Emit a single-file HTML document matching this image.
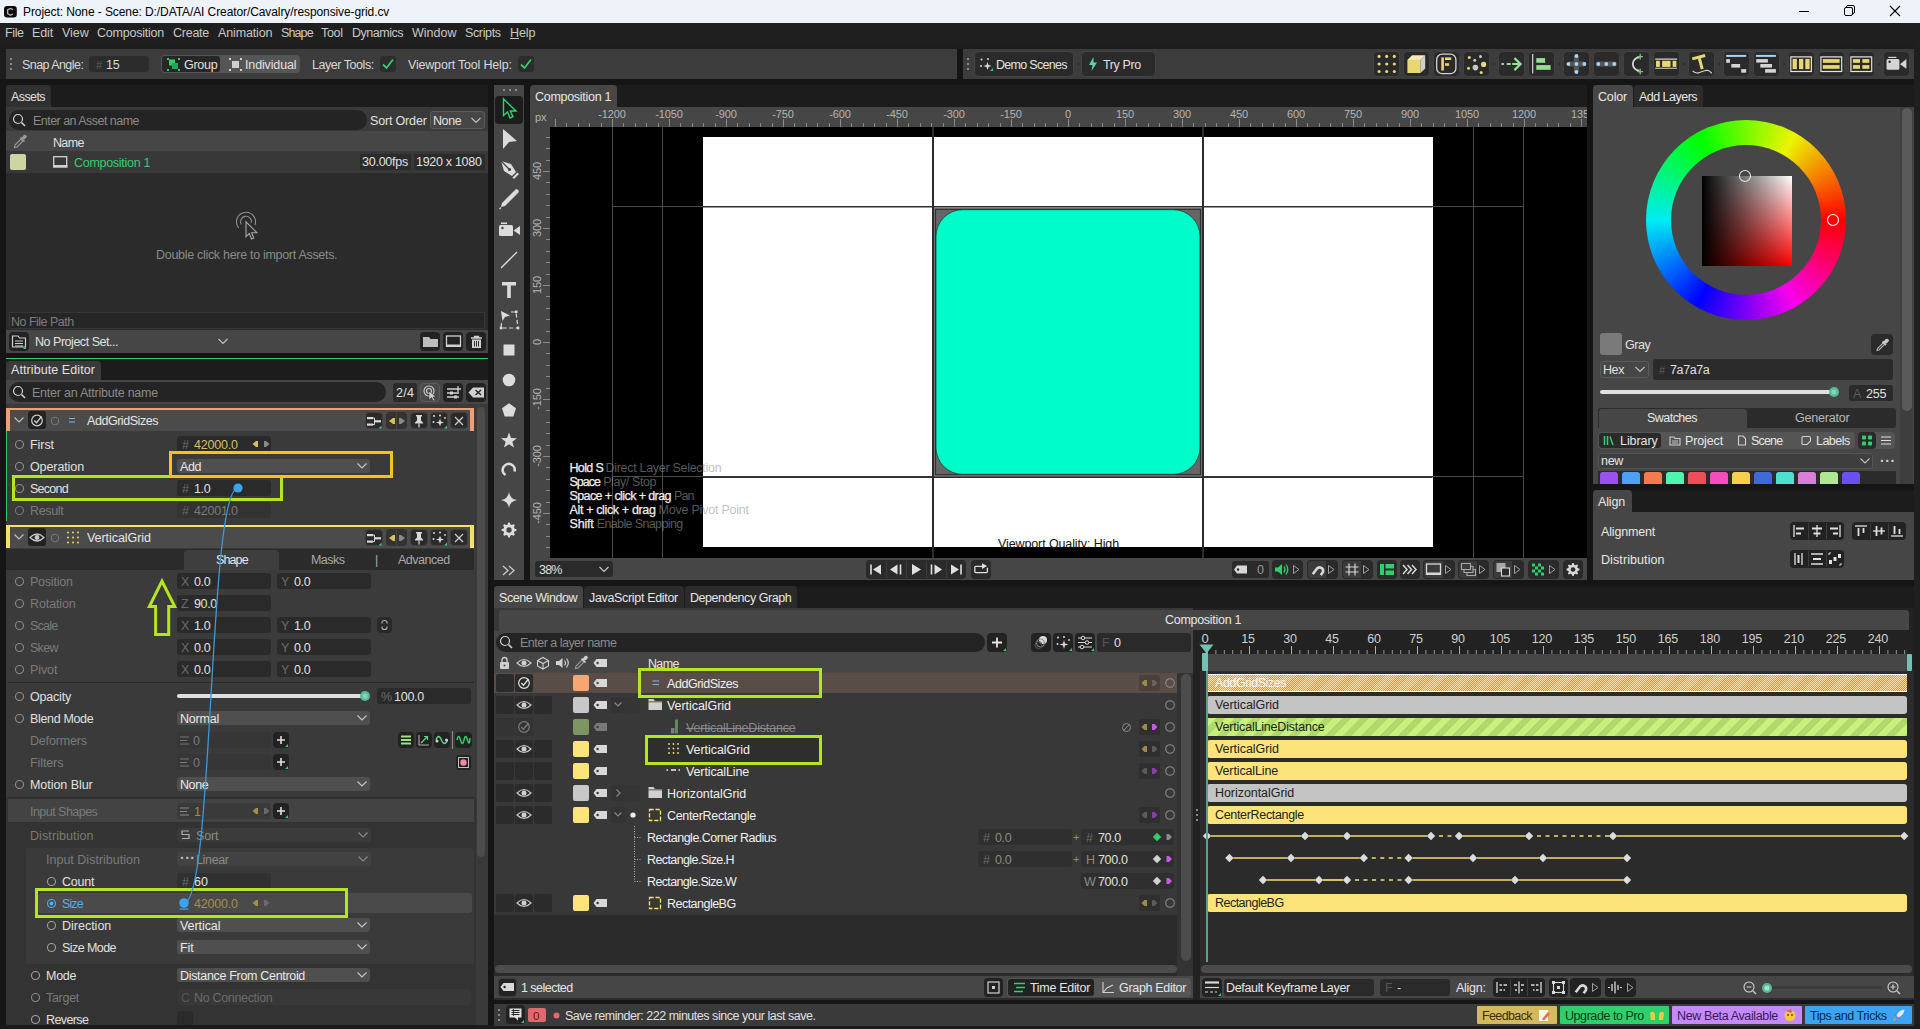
<!DOCTYPE html>
<html lang="en"><head><meta charset="utf-8"><title>Cavalry</title>
<style>
html,body{margin:0;padding:0;}
body{width:1920px;height:1029px;overflow:hidden;background:#151515;position:relative;
 font-family:"Liberation Sans",sans-serif;font-size:12px;letter-spacing:-0.1px;}
div,svg{position:absolute;box-sizing:border-box;}
.t{white-space:nowrap;}
.f{background:#2a2a2a;border-radius:3px;}
.dd{background:#555;border-radius:3px;}
.btn{background:#2a2a2a;border-radius:4px;}
</style></head>
<body>
<div style="left:0px;top:0px;width:1920px;height:23px;background:#eef3f9;"></div>
<svg style="left:3.5px;top:5.5px;" width="13" height="12" viewBox="0 0 13 12"><rect x="0" y="0" width="12.8" height="11.6" rx="3" fill="#0c0c0c"/><path d="M9 3.6 L6.4 2.4 L3.6 4 L3.6 7.6 L6.4 9.2 L9 8" fill="none" stroke="#b0b0b0" stroke-width="1.3"/></svg>
<div class="t" style="left:23px;top:3.5px;height:16px;line-height:16px;color:#000;letter-spacing:-0.09px;">Project: None - Scene: D:/DATA/AI Creator/Cavalry/responsive-grid.cv</div>
<svg style="left:1798px;top:3.5px;" width="14" height="14" viewBox="0 0 14 14"><path d="M1 7.5 H11" stroke="#000" stroke-width="1"/></svg>
<svg style="left:1843px;top:4px;" width="14" height="14" viewBox="0 0 14 14"><rect x="1.5" y="3.5" width="8" height="8" rx="1.5" fill="none" stroke="#000"/><path d="M3.5 3.5 V3 Q3.5 1.5 5 1.5 H10 Q11.5 1.5 11.5 3 V8 Q11.5 9.5 10 9.5 H9.5" fill="none" stroke="#000"/></svg>
<svg style="left:1889px;top:5px;" width="13" height="13" viewBox="0 0 13 13"><path d="M1 1 L11 11 M11 1 L1 11" stroke="#000" stroke-width="1.1"/></svg>
<div style="left:0px;top:23px;width:1920px;height:20px;background:#1f1f1f;"></div>
<div style="left:0px;top:43px;width:1920px;height:6px;background:#1d1d1d;"></div>
<div style="left:0px;top:49px;width:6px;height:30px;background:#1d1d1d;"></div>
<div style="left:1914px;top:43px;width:6px;height:986px;background:#1f1f1f;"></div>
<div class="t" style="left:5px;top:25px;height:16px;line-height:16px;color:#c8c8c8;font-size:12.5px;letter-spacing:-0.2px;letter-spacing:-0.389px;">File</div>
<div class="t" style="left:32px;top:25px;height:16px;line-height:16px;color:#c8c8c8;font-size:12.5px;letter-spacing:-0.2px;letter-spacing:-0.137px;">Edit</div>
<div class="t" style="left:62px;top:25px;height:16px;line-height:16px;color:#c8c8c8;font-size:12.5px;letter-spacing:-0.2px;letter-spacing:-0.044px;">View</div>
<div class="t" style="left:97px;top:25px;height:16px;line-height:16px;color:#c8c8c8;font-size:12.5px;letter-spacing:-0.2px;letter-spacing:-0.226px;">Composition</div>
<div class="t" style="left:173px;top:25px;height:16px;line-height:16px;color:#c8c8c8;font-size:12.5px;letter-spacing:-0.2px;letter-spacing:-0.255px;">Create</div>
<div class="t" style="left:218px;top:25px;height:16px;line-height:16px;color:#c8c8c8;font-size:12.5px;letter-spacing:-0.2px;letter-spacing:-0.133px;">Animation</div>
<div class="t" style="left:281px;top:25px;height:16px;line-height:16px;color:#c8c8c8;font-size:12.5px;letter-spacing:-0.2px;letter-spacing:-0.891px;">Shape</div>
<div class="t" style="left:321px;top:25px;height:16px;line-height:16px;color:#c8c8c8;font-size:12.5px;letter-spacing:-0.2px;letter-spacing:-0.334px;">Tool</div>
<div class="t" style="left:352px;top:25px;height:16px;line-height:16px;color:#c8c8c8;font-size:12.5px;letter-spacing:-0.2px;letter-spacing:-0.484px;">Dynamics</div>
<div class="t" style="left:412px;top:25px;height:16px;line-height:16px;color:#c8c8c8;font-size:12.5px;letter-spacing:-0.2px;letter-spacing:-0.011px;">Window</div>
<div class="t" style="left:465px;top:25px;height:16px;line-height:16px;color:#c8c8c8;font-size:12.5px;letter-spacing:-0.2px;letter-spacing:-0.358px;">Scripts</div>
<div class="t" style="left:510px;top:25px;height:16px;line-height:16px;color:#c8c8c8;font-size:12.5px;letter-spacing:-0.2px;letter-spacing:-0.080px;"><u>H</u>elp</div>
<div style="left:6px;top:49px;width:951px;height:30px;background:#3c3c3c;"></div>
<div style="left:963px;top:49px;width:951px;height:30px;background:#3c3c3c;"></div>
<div style="left:0px;top:79px;width:1914px;height:6px;background:#151515;"></div>
<div style="left:6px;top:85px;width:482px;height:22px;background:#1c1c1c;"></div>
<div style="left:6px;top:359px;width:482px;height:22px;background:#1c1c1c;"></div>
<div style="left:530px;top:85px;width:1057px;height:22px;background:#1c1c1c;"></div>
<div style="left:1593px;top:85px;width:321px;height:22px;background:#1c1c1c;"></div>
<div style="left:1593px;top:490px;width:321px;height:22px;background:#1c1c1c;"></div>
<div style="left:494px;top:586px;width:1420px;height:22px;background:#1c1c1c;"></div>
<div style="left:10px;top:58px;width:2px;height:2px;background:#8a8a8a;"></div>
<div style="left:10px;top:63px;width:2px;height:2px;background:#8a8a8a;"></div>
<div style="left:10px;top:68px;width:2px;height:2px;background:#8a8a8a;"></div>
<div style="left:967px;top:58px;width:2px;height:2px;background:#8a8a8a;"></div>
<div style="left:967px;top:63px;width:2px;height:2px;background:#8a8a8a;"></div>
<div style="left:967px;top:68px;width:2px;height:2px;background:#8a8a8a;"></div>
<div class="t" style="left:22px;top:57px;height:16px;line-height:16px;color:#d8d8d8;font-size:12.5px;letter-spacing:-0.2px;letter-spacing:-0.557px;">Snap Angle:</div>
<div style="left:89px;top:56px;width:60px;height:16px;background:#2c2c2c;border-radius:3px;"></div>
<div class="t" style="left:96px;top:57px;height:16px;line-height:16px;color:#5c5c5c;font-size:11px;">#</div>
<div class="t" style="left:106px;top:57px;height:16px;line-height:16px;color:#d8d8d8;font-size:12.5px;">15</div>
<div style="left:161px;top:55px;width:139px;height:18px;background:#555;border-radius:4px;"></div>
<div style="left:162px;top:56px;width:58px;height:16px;background:#262626;border-radius:3px;"></div>
<svg style="left:167px;top:58px;" width="13" height="13" viewBox="0 0 13 13"><rect x="2" y="1.5" width="6" height="6" fill="#2fd06c"/><rect x="5" y="5" width="6" height="6" fill="#23a554"/><g fill="#2fd06c"><rect x="0" y="0" width="2" height="2"/><rect x="11" y="0" width="2" height="2"/><rect x="0" y="11" width="2" height="2"/><rect x="11" y="11" width="2" height="2"/></g></svg>
<div class="t" style="left:184px;top:57px;height:16px;line-height:16px;color:#e0e0e0;font-size:12.5px;letter-spacing:-0.2px;letter-spacing:-0.290px;">Group</div>
<svg style="left:229px;top:58px;" width="13" height="13" viewBox="0 0 13 13"><rect x="3" y="3" width="7" height="7" fill="#d0d0d0"/><g fill="#d0d0d0"><rect x="0" y="0" width="2" height="2"/><rect x="11" y="0" width="2" height="2"/><rect x="0" y="11" width="2" height="2"/><rect x="11" y="11" width="2" height="2"/></g></svg>
<div class="t" style="left:245px;top:57px;height:16px;line-height:16px;color:#e0e0e0;font-size:12.5px;letter-spacing:-0.2px;letter-spacing:-0.143px;">Individual</div>
<div class="t" style="left:312px;top:57px;height:16px;line-height:16px;color:#d8d8d8;font-size:12.5px;letter-spacing:-0.2px;letter-spacing:-0.456px;">Layer Tools:</div>
<div style="left:380px;top:56px;width:16px;height:16px;background:#2c2c2c;border-radius:3px;"></div>
<svg style="left:381px;top:57px;" width="14" height="14" viewBox="0 0 14 14"><path d="M2 7.5 L5.5 11 L12 2.5" fill="none" stroke="#2fd06c" stroke-width="1.8"/></svg>
<div class="t" style="left:408px;top:57px;height:16px;line-height:16px;color:#d8d8d8;font-size:12.5px;letter-spacing:-0.2px;letter-spacing:-0.187px;">Viewport Tool Help:</div>
<div style="left:518px;top:56px;width:16px;height:16px;background:#2c2c2c;border-radius:3px;"></div>
<svg style="left:519px;top:57px;" width="14" height="14" viewBox="0 0 14 14"><path d="M2 7.5 L5.5 11 L12 2.5" fill="none" stroke="#2fd06c" stroke-width="1.8"/></svg>
<div style="left:974px;top:51px;width:100px;height:26px;background:#2a2a2a;border-radius:5px;border:1px solid #444;"></div>
<svg style="left:979px;top:57px;" width="15" height="15" viewBox="0 0 15 15"><g fill="#d8d8d8"><circle cx="2.5" cy="2.5" r="1"/><circle cx="9" cy="2" r="1"/><circle cx="2" cy="9" r="1"/><path d="M8.5 5 L9.5 8 L12.5 9 L9.5 10 L8.5 13 L7.5 10 L4.5 9 L7.5 8 Z"/></g><path d="M11 14 H14 V11 Z" fill="#2fd06c"/></svg>
<div class="t" style="left:996px;top:57px;height:16px;line-height:16px;color:#e0e0e0;font-size:12.5px;letter-spacing:-0.25px;letter-spacing:-0.711px;">Demo Scenes</div>
<div style="left:1081px;top:51px;width:75px;height:26px;background:#2a2a2a;border-radius:5px;border:1px solid #444;"></div>
<svg style="left:1087px;top:57px;" width="12" height="14" viewBox="0 0 12 14"><path d="M6.5 0 L2 8 H5.5 L4.5 14 L10 5.5 H6.5 Z" fill="#5fd3a3"/></svg>
<div class="t" style="left:1103px;top:57px;height:16px;line-height:16px;color:#e0e0e0;font-size:12.5px;letter-spacing:-0.2px;letter-spacing:-0.402px;">Try Pro</div>
<div style="left:1372.5px;top:51px;width:27px;height:26px;background:#2a2a2a;border-radius:4.5px;border:1px solid #424242;"></div>
<svg style="left:1372.5px;top:51px;" width="27" height="26" viewBox="0 0 27 26"><circle cx="6.1" cy="5.4" r="1.55" fill="#e8d873"/><circle cx="6.1" cy="13" r="1.55" fill="#e8d873"/><circle cx="6.1" cy="20.5" r="1.55" fill="#e8d873"/><circle cx="13.7" cy="5.4" r="1.55" fill="#e8d873"/><circle cx="13.7" cy="13" r="1.55" fill="#e8d873"/><circle cx="13.7" cy="20.5" r="1.55" fill="#e8d873"/><circle cx="21.3" cy="5.4" r="1.55" fill="#e8d873"/><circle cx="21.3" cy="13" r="1.55" fill="#e8d873"/><circle cx="21.3" cy="20.5" r="1.55" fill="#e8d873"/></svg>
<div style="left:1402.5px;top:51px;width:27px;height:26px;background:#2a2a2a;border-radius:4.5px;border:1px solid #424242;"></div>
<svg style="left:1402.5px;top:51px;" width="27" height="26" viewBox="0 0 27 26"><rect x="4.4" y="9" width="13.1" height="13" fill="#e8d873"/><path d="M4.4 9 L9.1 4.2 H22.2 L17.5 9 Z" fill="#f4ecb4"/><path d="M17.5 9 L22.2 4.2 V17.6 L17.5 22 Z" fill="#cfcfcf"/></svg>
<div style="left:1433px;top:51px;width:27px;height:26px;background:#2a2a2a;border-radius:4.5px;border:1px solid #424242;"></div>
<svg style="left:1433px;top:51px;" width="27" height="26" viewBox="0 0 27 26"><rect x="3.7" y="3.2" width="19.2" height="19.5" rx="5.5" fill="none" stroke="#d4d4d4" stroke-width="1.3"/><rect x="8.3" y="6.4" width="2.6" height="13.1" fill="#e8d873"/><rect x="12" y="6.4" width="6.2" height="2.6" fill="#e8d873"/><rect x="12" y="12.2" width="4.1" height="2.6" fill="#e8d873"/></svg>
<div style="left:1463px;top:51px;width:27px;height:26px;background:#2a2a2a;border-radius:4.5px;border:1px solid #424242;"></div>
<svg style="left:1463px;top:51px;" width="27" height="26" viewBox="0 0 27 26"><circle cx="6.3" cy="6.4" r="1.5" fill="#e8d873"/><circle cx="5.5" cy="17.3" r="1.5" fill="#e8d873"/><circle cx="18.2" cy="21.4" r="1.5" fill="#e8d873"/><circle cx="17.5" cy="5.4" r="1.5" fill="#c8c8c8"/><circle cx="11.7" cy="9.3" r="1.5" fill="#c8c8c8"/><circle cx="20.6" cy="13.4" r="2.6" fill="#e8d873"/><circle cx="12.4" cy="16.6" r="2.8" fill="#c8c8c8"/></svg>
<div style="left:1497.5px;top:51px;width:27px;height:26px;background:#2a2a2a;border-radius:4.5px;border:1px solid #424242;"></div>
<svg style="left:1497.5px;top:51px;" width="27" height="26" viewBox="0 0 27 26"><path d="M3.5 13 H5.9 M8.8 13 H12.7 M14.2 13 H22" stroke="#96e096" stroke-width="2"/><path d="M16.4 7.1 L22.6 13 L16.4 19.1" stroke="#96e096" stroke-width="2.2" fill="none"/></svg>
<div style="left:1527.5px;top:51px;width:27px;height:26px;background:#2a2a2a;border-radius:4.5px;border:1px solid #424242;"></div>
<svg style="left:1527.5px;top:51px;" width="27" height="26" viewBox="0 0 27 26"><path d="M4.7 3 V22.4" stroke="#d4d4d4" stroke-width="1.2"/><rect x="8.3" y="7.1" width="8.8" height="4.7" fill="#96e096"/><rect x="8.3" y="14.1" width="14.3" height="4.7" fill="#96e096"/></svg>
<div style="left:1562.5px;top:51px;width:27px;height:26px;background:#2a2a2a;border-radius:4.5px;border:1px solid #424242;"></div>
<svg style="left:1562.5px;top:51px;" width="27" height="26" viewBox="0 0 27 26"><path d="M13.4 5 V21 M5.4 13 H21.4" stroke="#555" stroke-width="5"/><circle cx="13.4" cy="5" r="1.9" fill="#a6d4fa"/><circle cx="13.4" cy="13" r="1.9" fill="#a6d4fa"/><circle cx="13.4" cy="21" r="1.9" fill="#a6d4fa"/><circle cx="5.4" cy="13" r="1.9" fill="#a6d4fa"/><circle cx="21.4" cy="13" r="1.9" fill="#a6d4fa"/></svg>
<div style="left:1593px;top:51px;width:27px;height:26px;background:#2a2a2a;border-radius:4.5px;border:1px solid #424242;"></div>
<svg style="left:1593px;top:51px;" width="27" height="26" viewBox="0 0 27 26"><path d="M5.3 13 H21.3" stroke="#555" stroke-width="5" stroke-linecap="round"/><circle cx="5.3" cy="13" r="1.9" fill="#a6d4fa"/><circle cx="13.3" cy="13" r="1.9" fill="#a6d4fa"/><circle cx="21.3" cy="13" r="1.9" fill="#a6d4fa"/></svg>
<div style="left:1623px;top:51px;width:27px;height:26px;background:#2a2a2a;border-radius:4.5px;border:1px solid #424242;"></div>
<svg style="left:1623px;top:51px;" width="27" height="26" viewBox="0 0 27 26"><path d="M16.4 6.4 A6.6 6.6 0 0 0 16.4 19.6" fill="none" stroke="#d4d4d4" stroke-width="1.8"/><path d="M14 5.6 H20 M17.2 2.8 V8.4 M14 20.6 H20 M17.2 17.8 V23.4" stroke="#7ec07e" stroke-width="1.3"/></svg>
<div style="left:1653px;top:51px;width:27px;height:26px;background:#2a2a2a;border-radius:4.5px;border:1px solid #424242;"></div>
<svg style="left:1653px;top:51px;" width="27" height="26" viewBox="0 0 27 26"><path d="M2.2 8.1 H24.1 M2.2 17.3 H24.1" stroke="#d4d4d4" stroke-width="1.1"/><rect x="3" y="9.8" width="3.9" height="6.1" fill="#e8d873"/><rect x="9.1" y="9.8" width="8.4" height="6.1" fill="#e8d873"/><rect x="19.6" y="9.8" width="3.8" height="6.1" fill="#e8d873"/></svg>
<div style="left:1688px;top:51px;width:27px;height:26px;background:#2a2a2a;border-radius:4.5px;border:1px solid #424242;"></div>
<svg style="left:1688px;top:51px;" width="27" height="26" viewBox="0 0 27 26"><path d="M4.3 7.9 L17.1 4.5" stroke="#e8d873" stroke-width="3"/><path d="M11.3 7.1 L14.2 18.1" stroke="#e8d873" stroke-width="3"/><path d="M4.7 20 Q8 23 11.5 21.5 T18.6 19.3 Q22 19.5 23.7 22.4" fill="none" stroke="#d4d4d4" stroke-width="1.1"/></svg>
<div style="left:1723px;top:51px;width:27px;height:26px;background:#2a2a2a;border-radius:4.5px;border:1px solid #424242;"></div>
<svg style="left:1723px;top:51px;" width="27" height="26" viewBox="0 0 27 26"><path d="M3.2 4.9 H23.2" stroke="#a6d4fa" stroke-width="2"/><rect x="3.2" y="8.1" width="3.7" height="3.7" fill="#d4d4d4"/><rect x="8.3" y="13" width="8.8" height="3.6" fill="#d4d4d4"/><rect x="18.2" y="18.1" width="5" height="3.6" fill="#d4d4d4"/></svg>
<div style="left:1753px;top:51px;width:27px;height:26px;background:#2a2a2a;border-radius:4.5px;border:1px solid #424242;"></div>
<svg style="left:1753px;top:51px;" width="27" height="26" viewBox="0 0 27 26"><path d="M2.9 4.9 H22.9" stroke="#a6d4fa" stroke-width="2"/><rect x="3.2" y="8.1" width="11.7" height="3.5" fill="#d4d4d4"/><rect x="7.3" y="13" width="11.7" height="3.6" fill="#d4d4d4"/><rect x="12.1" y="18.1" width="10.8" height="3.6" fill="#d4d4d4"/></svg>
<div style="left:1788px;top:51px;width:27px;height:26px;background:#2a2a2a;border-radius:4.5px;border:1px solid #424242;"></div>
<svg style="left:1788px;top:51px;" width="27" height="26" viewBox="0 0 27 26"><rect x="2.8" y="5.9" width="20.6" height="14.6" fill="none" stroke="#e4e4e4" stroke-width="1.2"/><rect x="4.6" y="7.9" width="4.3" height="10.2" fill="#e8d873"/><rect x="11" y="7.9" width="4.3" height="10.2" fill="#e8d873"/><rect x="17.3" y="7.9" width="4.3" height="10.2" fill="#e8d873"/></svg>
<div style="left:1818px;top:51px;width:27px;height:26px;background:#2a2a2a;border-radius:4.5px;border:1px solid #424242;"></div>
<svg style="left:1818px;top:51px;" width="27" height="26" viewBox="0 0 27 26"><rect x="2.9" y="5.9" width="20.8" height="14.6" fill="none" stroke="#e4e4e4" stroke-width="1.2"/><rect x="4.8" y="8.1" width="16.8" height="3.7" fill="#e8d873"/><rect x="4.8" y="14.1" width="16.8" height="3.7" fill="#e8d873"/></svg>
<div style="left:1848px;top:51px;width:27px;height:26px;background:#2a2a2a;border-radius:4.5px;border:1px solid #424242;"></div>
<svg style="left:1848px;top:51px;" width="27" height="26" viewBox="0 0 27 26"><rect x="2.9" y="5.9" width="20.8" height="14.6" fill="none" stroke="#e4e4e4" stroke-width="1.2"/><rect x="4.9" y="8.1" width="7.1" height="3.7" fill="#e8d873"/><rect x="14.3" y="8.1" width="7" height="3.7" fill="#e8d873"/><rect x="4.9" y="14.1" width="7.1" height="3.7" fill="#e8d873"/><rect x="14.3" y="14.1" width="7" height="3.7" fill="#e8d873"/></svg>
<div style="left:1882.5px;top:51px;width:27px;height:26px;background:#2a2a2a;border-radius:4.5px;border:1px solid #424242;"></div>
<svg style="left:1882.5px;top:51px;" width="27" height="26" viewBox="0 0 27 26"><rect x="3.5" y="8.1" width="12.9" height="10.7" rx="1.5" fill="#d4d4d4"/><path d="M17 13.2 L23.4 8.1 V17.8 Z" fill="#d4d4d4"/><rect x="5.4" y="5.8" width="8" height="1.2" fill="#d4d4d4"/><circle cx="6.6" cy="10.7" r="1.2" fill="#2a2a2a"/></svg>
<div style="left:1492.5px;top:63px;width:2px;height:2px;background:#2a2a2a;border-radius:1px;"></div>
<div style="left:1557.5px;top:63px;width:2px;height:2px;background:#2a2a2a;border-radius:1px;"></div>
<div style="left:1682.5px;top:63px;width:2px;height:2px;background:#2a2a2a;border-radius:1px;"></div>
<div style="left:1717.5px;top:63px;width:2px;height:2px;background:#2a2a2a;border-radius:1px;"></div>
<div style="left:1782.5px;top:63px;width:2px;height:2px;background:#2a2a2a;border-radius:1px;"></div>
<div style="left:1877.5px;top:63px;width:2px;height:2px;background:#2a2a2a;border-radius:1px;"></div>
<div style="left:1076.5px;top:63px;width:2px;height:2px;background:#2a2a2a;border-radius:1px;"></div>
<div style="left:6px;top:85px;width:45px;height:23px;background:#303030;border-radius:4px 4px 0 0;"></div>
<div class="t" style="left:11px;top:89px;height:16px;line-height:16px;color:#e0e0e0;font-size:12.5px;letter-spacing:-0.35px;letter-spacing:-0.586px;">Assets</div>
<div style="left:6px;top:107px;width:482px;height:246px;background:#2b2b2b;"></div>
<div style="left:6px;top:107px;width:482px;height:24px;background:#3a3a3a;"></div>
<div style="left:9px;top:110px;width:358px;height:20px;background:#242424;border-radius:10px;"></div>
<svg style="left:12px;top:113px;" width="15" height="15" viewBox="0 0 15 15"><circle cx="6" cy="6" r="4.5" fill="none" stroke="#d0d0d0" stroke-width="1.2"/><path d="M9.5 9.5 L13 13" stroke="#d0d0d0" stroke-width="1.6"/></svg>
<div class="t" style="left:33px;top:112.5px;height:16px;line-height:16px;color:#8a8a8a;font-size:12.5px;letter-spacing:-0.35px;letter-spacing:-0.529px;">Enter an Asset name</div>
<div class="t" style="left:370px;top:112.5px;height:16px;line-height:16px;color:#e0e0e0;font-size:12.5px;letter-spacing:-0.35px;letter-spacing:-0.166px;">Sort Order</div>
<div style="left:430px;top:111px;width:55px;height:18px;background:#464646;border-radius:3px;border:1px solid #5a5a5a;"></div>
<div class="t" style="left:433px;top:112.5px;height:16px;line-height:16px;color:#e0e0e0;font-size:12.5px;letter-spacing:-0.35px;letter-spacing:-0.423px;">None</div>
<svg style="left:470px;top:116px;" width="12" height="9" viewBox="0 0 12 9"><path d="M1.5 2 L6 6.5 L10.5 2" fill="none" stroke="#c0c0c0" stroke-width="1.2"/></svg>
<div style="left:6px;top:131px;width:482px;height:20px;background:#464646;"></div>
<svg style="left:13px;top:134px;" width="14" height="15" viewBox="0 0 14 15"><path d="M1.5 13.5 L2 11 L8 5 L10 7 L4 13 Z" fill="none" stroke="#9a9a9a" stroke-width="1.1"/><path d="M7.5 3.5 L11.5 7.5 M9 5 L11 2 Q12.5 1 13 2.5 L11 5" stroke="#9a9a9a" stroke-width="1.6" fill="#9a9a9a"/></svg>
<div class="t" style="left:53px;top:134.5px;height:16px;line-height:16px;color:#e0e0e0;font-size:12.5px;letter-spacing:-0.35px;letter-spacing:-0.661px;">Name</div>
<div style="left:6px;top:151px;width:482px;height:22px;background:#383838;"></div>
<div style="left:10px;top:154px;width:16px;height:16px;background:#cdd5a3;border-radius:2px;"></div>
<svg style="left:53px;top:156px;" width="15" height="13" viewBox="0 0 15 13"><rect x="0.7" y="0.7" width="13" height="10" fill="none" stroke="#d0d0d0" stroke-width="1.3"/><rect x="0" y="9" width="14.4" height="2.6" fill="#d0d0d0"/></svg>
<div class="t" style="left:74px;top:154.5px;height:16px;line-height:16px;color:#2fd06c;font-size:12.5px;letter-spacing:-0.35px;letter-spacing:-0.285px;">Composition 1</div>
<div style="left:360px;top:154px;width:51px;height:16px;background:#2b2b2b;border-radius:2px;"></div>
<div class="t" style="left:362px;top:154px;height:16px;line-height:16px;color:#e0e0e0;font-size:12.5px;letter-spacing:-0.3px;letter-spacing:-0.246px;">30.00fps</div>
<div style="left:414px;top:154px;width:71px;height:16px;background:#2b2b2b;border-radius:2px;"></div>
<div class="t" style="left:416px;top:154px;height:16px;line-height:16px;color:#e0e0e0;font-size:12.5px;letter-spacing:-0.3px;letter-spacing:-0.292px;">1920 x 1080</div>
<svg style="left:233px;top:209px;" width="28" height="34" viewBox="0 0 28 34"><path d="M21.93 16.05 A9.5 9.5 0 1 0 5.72 18.9" fill="none" stroke="#8e8e8e" stroke-width="1.1"/><path d="M18.42 13.75 A5.5 5.5 0 1 0 8.24 15.55" fill="none" stroke="#8e8e8e" stroke-width="1.1"/><path d="M13 12.8 L13 27.7 L16.3 24.5 L18.5 30 L20.8 29 L18.6 23.7 L23.9 23.7 Z" fill="#2b2b2b" stroke="#a8a8a8" stroke-width="1.1"/></svg>
<div class="t" style="left:156px;top:247px;height:16px;line-height:16px;color:#8a8a8a;font-size:12.5px;letter-spacing:-0.28px;letter-spacing:-0.299px;">Double click here to import Assets.</div>
<div style="left:6px;top:330px;width:482px;height:23px;background:#464646;"></div>
<div style="left:9px;top:312px;width:476px;height:17px;background:#262626;border:1px solid #363636;"></div>
<div class="t" style="left:11px;top:313.5px;height:16px;line-height:16px;color:#7c7c7c;font-size:12.5px;letter-spacing:-0.35px;letter-spacing:-0.507px;">No File Path</div>
<div style="left:9px;top:332px;width:20px;height:19px;background:#222;border-radius:4px;"></div>
<svg style="left:11px;top:334px;" width="16" height="15" viewBox="0 0 16 15"><path d="M1.5 2 H7 L8.5 4 H14.5 V13 H1.5 Z" fill="none" stroke="#d0d0d0" stroke-width="1.2"/><path d="M4 7 H12 M4 9.5 H12 M4 12 H12" stroke="#d0d0d0" stroke-width="1.1"/><path d="M12 15 H15 V12 Z" fill="#2fd06c"/></svg>
<div style="left:32px;top:332px;width:200px;height:19px;background:#464646;border-radius:3px;"></div>
<div class="t" style="left:35px;top:334px;height:16px;line-height:16px;color:#e0e0e0;font-size:12.5px;letter-spacing:-0.35px;letter-spacing:-0.472px;">No Project Set...</div>
<svg style="left:217px;top:337px;" width="12" height="9" viewBox="0 0 12 9"><path d="M1.5 2 L6 6.5 L10.5 2" fill="none" stroke="#c0c0c0" stroke-width="1.2"/></svg>
<div style="left:420px;top:332px;width:20px;height:19px;background:#222;border-radius:4px;"></div>
<svg style="left:420px;top:332px;" width="21" height="19" viewBox="0 0 21 19"><path d="M3 5 H9 L10.5 7 H18 V15 H3 Z" fill="#bdbdbd"/></svg>
<div style="left:443px;top:332px;width:20px;height:19px;background:#222;border-radius:4px;"></div>
<svg style="left:443px;top:332px;" width="21" height="19" viewBox="0 0 21 19"><rect x="3.5" y="4" width="14" height="10" fill="none" stroke="#d0d0d0" stroke-width="1.3"/><rect x="3" y="12.5" width="15" height="2.5" fill="#d0d0d0"/></svg>
<div style="left:466px;top:332px;width:20px;height:19px;background:#222;border-radius:4px;"></div>
<svg style="left:466px;top:332px;" width="21" height="19" viewBox="0 0 21 19"><path d="M5 6 H16 M8.5 6 V4.5 H12.5 V6" stroke="#d0d0d0" stroke-width="1.3" fill="none"/><path d="M6 7.5 H15 V16 H6 Z" fill="#d0d0d0"/><path d="M8.5 9 V14.5 M10.5 9 V14.5 M12.5 9 V14.5" stroke="#222" stroke-width="0.9"/></svg>
<div style="left:6px;top:357.5px;width:482px;height:1.7px;background:#2fd06c;"></div>
<div style="left:6px;top:361px;width:95px;height:19px;background:#3a3a3a;border-radius:4px 4px 0 0;"></div>
<div class="t" style="left:11px;top:362px;height:16px;line-height:16px;color:#e0e0e0;font-size:12.5px;letter-spacing:-0.35px;letter-spacing:0.082px;">Attribute Editor</div>
<div style="left:6px;top:380px;width:482px;height:649px;background:#3a3a3a;"></div>
<div style="left:6px;top:380px;width:482px;height:24px;background:#464646;"></div>
<div style="left:9px;top:382px;width:377px;height:20px;background:#242424;border-radius:10px;"></div>
<svg style="left:12px;top:385px;" width="15" height="15" viewBox="0 0 15 15"><circle cx="6" cy="6" r="4.5" fill="none" stroke="#d0d0d0" stroke-width="1.2"/><path d="M9.5 9.5 L13 13" stroke="#d0d0d0" stroke-width="1.6"/></svg>
<div class="t" style="left:32px;top:385px;height:16px;line-height:16px;color:#8a8a8a;font-size:12.5px;letter-spacing:-0.35px;letter-spacing:-0.232px;">Enter an Attribute name</div>
<div style="left:393px;top:383px;width:24px;height:19px;background:#2a2a2a;border-radius:3px;"></div>
<div class="t" style="left:396px;top:385px;height:16px;line-height:16px;color:#e0e0e0;font-size:12.5px;letter-spacing:-0.35px;letter-spacing:0.303px;">2/4</div>
<div style="left:420px;top:382.5px;width:20px;height:19px;background:#4a4a4a;border-radius:4px;border:1px solid #5c5c5c;"></div>
<svg style="left:420px;top:382.5px;" width="21" height="19" viewBox="0 0 21 19"><circle cx="9" cy="8" r="5" fill="none" stroke="#d0d0d0" stroke-width="1.1"/><circle cx="9" cy="8" r="2.5" fill="none" stroke="#d0d0d0" stroke-width="1.1"/><path d="M9 8 V17 L11.5 14.5 L13.5 18 L15 17 L13 14 H16 Z" fill="#d0d0d0" stroke="#222" stroke-width="0.5"/></svg>
<div style="left:443px;top:382.5px;width:20px;height:19px;background:#222;border-radius:4px;"></div>
<svg style="left:443px;top:382.5px;" width="21" height="19" viewBox="0 0 21 19"><path d="M4 6 H12 M4 10 H16 M4 14 H16" stroke="#d0d0d0" stroke-width="1.6"/><path d="M15 3 V9 M12 6 H18" stroke="#d0d0d0" stroke-width="1.3"/><rect x="7" y="8.5" width="3" height="3" fill="#d0d0d0"/><rect x="11" y="12.5" width="3" height="3" fill="#d0d0d0"/></svg>
<div style="left:466px;top:382.5px;width:20px;height:19px;background:#222;border-radius:4px;"></div>
<svg style="left:466px;top:382.5px;" width="21" height="19" viewBox="0 0 21 19"><path d="M2.5 9.5 L7 4.5 H18 V14.5 H7 Z" fill="#d0d0d0"/><path d="M9.5 7 L15 12 M15 7 L9.5 12" stroke="#222" stroke-width="1.4"/></svg>
<div style="left:6px;top:405px;width:470px;height:624px;background:#3a3a3a;"></div>
<div style="left:477px;top:407px;width:8px;height:450px;background:#4c4c4c;border-radius:4px;"></div>
<div style="left:6px;top:408px;width:468px;height:23px;background:#4b4b4b;"></div>
<div style="left:6px;top:408px;width:468px;height:1.5px;background:#f0a070;"></div>
<div style="left:6px;top:408px;width:4px;height:23px;background:#f0a070;border-radius:3px 0 0 0;"></div>
<div style="left:470px;top:408px;width:4px;height:23px;background:#f0a070;border-radius:0 3px 0 0;"></div>
<svg style="left:13px;top:415px;" width="12" height="10" viewBox="0 0 12 10"><path d="M1.5 2.5 L6 7 L10.5 2.5" fill="none" stroke="#c0c0c0" stroke-width="1.2"/></svg>
<div style="left:28px;top:411px;width:18px;height:18px;background:#222;border-radius:3px;"></div>
<svg style="left:28px;top:411.5px;" width="18" height="17" viewBox="0 0 18 17"><circle cx="9" cy="8.5" r="5.3" fill="none" stroke="#d0d0d0" stroke-width="1.2"/><path d="M6.3 8.5 L8.5 10.7 L13.5 4.5" fill="none" stroke="#d0d0d0" stroke-width="1.3"/></svg>
<svg style="left:50px;top:416px;" width="10" height="10" viewBox="0 0 10 10"><circle cx="5" cy="5" r="3.7" fill="none" stroke="#777" stroke-width="1.1"/></svg>
<svg style="left:64px;top:413px;" width="18" height="15" viewBox="0 0 18 15"><path d="M5 5.5 H11 M5 9 H11" stroke="#7ab4f0" stroke-width="1.2"/></svg>
<div class="t" style="left:87px;top:413px;height:16px;line-height:16px;color:#e6e6e6;font-size:12.5px;letter-spacing:-0.35px;letter-spacing:-0.453px;">AddGridSizes</div>
<div style="left:365px;top:411.5px;width:18px;height:17.5px;background:#2a2a2a;border-radius:4px;border:1px solid #404040;"></div>
<svg style="left:364px;top:411.5px;" width="20" height="18" viewBox="0 0 20 18"><g fill="#d8d8d8"><rect x="3" y="5" width="6" height="2.2"/><rect x="3" y="11.5" width="6" height="2.2"/><rect x="11" y="8.2" width="6" height="2.2"/></g><path d="M9 6 H10.5 V12.6 H9 M10.5 9.3 H11" stroke="#d8d8d8" stroke-width="1" fill="none"/><path d="M14.5 16.5 H17.5 V13.5 Z" fill="#2fd06c"/></svg>
<div style="left:386px;top:411.5px;width:21px;height:17.5px;background:#333;border-radius:4px;"></div>
<div style="left:396px;top:412px;width:1px;height:16.5px;background:#454545;"></div>
<svg style="left:384.5px;top:411.5px;" width="24" height="18" viewBox="0 0 24 18"><path d="M4 9 L8 6 H10 V12 H8 Z" fill="#d9bf5a"/><path d="M20 9 L16 6 H14 V12 H16 Z" fill="#8a8a8a"/></svg>
<div style="left:410px;top:411.5px;width:18px;height:17.5px;background:#2a2a2a;border-radius:4px;border:1px solid #404040;"></div>
<svg style="left:410px;top:411.5px;" width="18" height="18" viewBox="0 0 18 18"><path d="M6 3 H12 V4.5 H11 V8.5 L13 10.5 V11.5 H5 V10.5 L7 8.5 V4.5 H6 Z" fill="#d8d8d8"/><path d="M9 11.5 V15.5" stroke="#d8d8d8" stroke-width="1.2"/></svg>
<div style="left:430px;top:411.5px;width:18px;height:17.5px;background:#2a2a2a;border-radius:4px;border:1px solid #404040;"></div>
<svg style="left:429.5px;top:411.5px;" width="19" height="18" viewBox="0 0 19 18"><g fill="#d8d8d8"><circle cx="4" cy="4" r="1"/><circle cx="10" cy="3.5" r="1"/><circle cx="3.5" cy="10" r="1"/><circle cx="15" cy="6" r="0.9"/><path d="M10 6.5 L11 9.5 L14 10.5 L11 11.5 L10 14.5 L9 11.5 L6 10.5 L9 9.5 Z"/></g><path d="M14 16.5 H17 V13.5 Z" fill="#2fd06c"/></svg>
<div style="left:450px;top:411.5px;width:18px;height:17.5px;background:#2a2a2a;border-radius:4px;border:1px solid #404040;"></div>
<svg style="left:450px;top:411.5px;" width="18" height="18" viewBox="0 0 18 18"><path d="M5 5 L13 13 M13 5 L5 13" stroke="#d0d0d0" stroke-width="1.2"/></svg>
<div style="left:6px;top:431px;width:1px;height:90px;background:#2fd06c;"></div>
<svg style="left:13.5px;top:438.5px;" width="11" height="11" viewBox="0 0 11 11"><circle cx="5.5" cy="5.5" r="4" fill="none" stroke="#8e8e8e" stroke-width="1.1"/></svg>
<div class="t" style="left:30px;top:436.5px;height:16px;line-height:16px;color:#e0e0e0;font-size:12.5px;letter-spacing:-0.35px;letter-spacing:-0.062px;">First</div>
<div style="left:177px;top:436px;width:94px;height:16px;background:#2a2a2a;border-radius:3px;"></div>
<div class="t" style="left:182px;top:436.5px;height:16px;line-height:16px;color:#6a6a6a;font-size:12.5px;">#</div>
<div class="t" style="left:194px;top:436.5px;height:16px;line-height:16px;color:#d9bf5a;font-size:12.5px;letter-spacing:-0.35px;letter-spacing:-0.212px;">42000.0</div>
<svg style="left:252px;top:440px;" width="20" height="8" viewBox="0 0 20 8"><path d="M0.5 4 L4 1 H6 V7 H4 Z" fill="#d9bf5a"/><path d="M17.5 4 L14 1 H12 V7 H14 Z" fill="#8a8a8a"/></svg>
<svg style="left:13.5px;top:460.5px;" width="11" height="11" viewBox="0 0 11 11"><circle cx="5.5" cy="5.5" r="4" fill="none" stroke="#8e8e8e" stroke-width="1.1"/></svg>
<div class="t" style="left:30px;top:458.5px;height:16px;line-height:16px;color:#e0e0e0;font-size:12.5px;letter-spacing:-0.35px;letter-spacing:-0.101px;">Operation</div>
<div style="left:177px;top:459px;width:193px;height:14px;background:#4f4f4f;border-radius:3px;"></div>
<div class="t" style="left:180px;top:459px;height:16px;line-height:16px;color:#e8e8e8;font-size:12.5px;letter-spacing:-0.35px;letter-spacing:-0.417px;">Add</div>
<svg style="left:356px;top:462px;" width="12" height="9" viewBox="0 0 12 9"><path d="M1.5 1.5 L6 6 L10.5 1.5" fill="none" stroke="#c8c8c8" stroke-width="1.1"/></svg>
<svg style="left:13.5px;top:482.5px;" width="11" height="11" viewBox="0 0 11 11"><circle cx="5.5" cy="5.5" r="4" fill="none" stroke="#8e8e8e" stroke-width="1.1"/></svg>
<div class="t" style="left:30px;top:480.5px;height:16px;line-height:16px;color:#e0e0e0;font-size:12.5px;letter-spacing:-0.35px;letter-spacing:-0.734px;">Second</div>
<div style="left:177px;top:480px;width:94px;height:16px;background:#2a2a2a;border-radius:3px;"></div>
<div class="t" style="left:182px;top:480.5px;height:16px;line-height:16px;color:#6a6a6a;font-size:12.5px;">#</div>
<div class="t" style="left:194px;top:480.5px;height:16px;line-height:16px;color:#e0e0e0;font-size:12.5px;letter-spacing:-0.35px;letter-spacing:-0.330px;">1.0</div>
<svg style="left:13.5px;top:504.5px;" width="11" height="11" viewBox="0 0 11 11"><circle cx="5.5" cy="5.5" r="4" fill="none" stroke="#777" stroke-width="1.1"/></svg>
<div class="t" style="left:30px;top:502.5px;height:16px;line-height:16px;color:#7a7a7a;font-size:12.5px;letter-spacing:-0.35px;letter-spacing:-0.356px;">Result</div>
<div style="left:177px;top:502px;width:94px;height:16px;background:#333;border-radius:3px;"></div>
<div class="t" style="left:182px;top:502.5px;height:16px;line-height:16px;color:#6a6a6a;font-size:12.5px;">#</div>
<div class="t" style="left:194px;top:502.5px;height:16px;line-height:16px;color:#7a7a7a;font-size:12.5px;letter-spacing:-0.35px;letter-spacing:-0.212px;">42001.0</div>
<div style="left:6px;top:525px;width:468px;height:23px;background:#4b4b4b;"></div>
<div style="left:6px;top:525px;width:468px;height:1.5px;background:#f5e06a;"></div>
<div style="left:6px;top:525px;width:4px;height:23px;background:#f5e06a;border-radius:3px 0 0 0;"></div>
<div style="left:470px;top:525px;width:4px;height:23px;background:#f5e06a;border-radius:0 3px 0 0;"></div>
<svg style="left:13px;top:532px;" width="12" height="10" viewBox="0 0 12 10"><path d="M1.5 2.5 L6 7 L10.5 2.5" fill="none" stroke="#c0c0c0" stroke-width="1.2"/></svg>
<div style="left:28px;top:528px;width:18px;height:18px;background:#222;border-radius:3px;"></div>
<svg style="left:28px;top:528.5px;" width="18" height="17" viewBox="0 0 18 17"><path d="M2 8.5 Q9 1.5 16 8.5 Q9 15.5 2 8.5 Z" fill="none" stroke="#c8c8c8" stroke-width="1.2"/><circle cx="9" cy="8.5" r="2.4" fill="#c8c8c8"/></svg>
<svg style="left:50px;top:533px;" width="10" height="10" viewBox="0 0 10 10"><circle cx="5" cy="5" r="3.7" fill="none" stroke="#777" stroke-width="1.1"/></svg>
<svg style="left:64px;top:530px;" width="18" height="15" viewBox="0 0 18 15"><circle cx="4" cy="2.5" r="1" fill="#f0d860"/><circle cx="4" cy="7.5" r="1" fill="#f0d860"/><circle cx="4" cy="12.5" r="1" fill="#f0d860"/><circle cx="9" cy="2.5" r="1" fill="#f0d860"/><circle cx="9" cy="7.5" r="1" fill="#f0d860"/><circle cx="9" cy="12.5" r="1" fill="#f0d860"/><circle cx="14" cy="2.5" r="1" fill="#f0d860"/><circle cx="14" cy="7.5" r="1" fill="#f0d860"/><circle cx="14" cy="12.5" r="1" fill="#f0d860"/></svg>
<div class="t" style="left:87px;top:530px;height:16px;line-height:16px;color:#e6e6e6;font-size:12.5px;letter-spacing:-0.35px;letter-spacing:-0.051px;">VerticalGrid</div>
<div style="left:365px;top:528.5px;width:18px;height:17.5px;background:#2a2a2a;border-radius:4px;border:1px solid #404040;"></div>
<svg style="left:364px;top:528.5px;" width="20" height="18" viewBox="0 0 20 18"><g fill="#d8d8d8"><rect x="3" y="5" width="6" height="2.2"/><rect x="3" y="11.5" width="6" height="2.2"/><rect x="11" y="8.2" width="6" height="2.2"/></g><path d="M9 6 H10.5 V12.6 H9 M10.5 9.3 H11" stroke="#d8d8d8" stroke-width="1" fill="none"/><path d="M14.5 16.5 H17.5 V13.5 Z" fill="#2fd06c"/></svg>
<div style="left:386px;top:528.5px;width:21px;height:17.5px;background:#333;border-radius:4px;"></div>
<div style="left:396px;top:529px;width:1px;height:16.5px;background:#454545;"></div>
<svg style="left:384.5px;top:528.5px;" width="24" height="18" viewBox="0 0 24 18"><path d="M4 9 L8 6 H10 V12 H8 Z" fill="#d9bf5a"/><path d="M20 9 L16 6 H14 V12 H16 Z" fill="#8a8a8a"/></svg>
<div style="left:410px;top:528.5px;width:18px;height:17.5px;background:#2a2a2a;border-radius:4px;border:1px solid #404040;"></div>
<svg style="left:410px;top:528.5px;" width="18" height="18" viewBox="0 0 18 18"><path d="M6 3 H12 V4.5 H11 V8.5 L13 10.5 V11.5 H5 V10.5 L7 8.5 V4.5 H6 Z" fill="#d8d8d8"/><path d="M9 11.5 V15.5" stroke="#d8d8d8" stroke-width="1.2"/></svg>
<div style="left:430px;top:528.5px;width:18px;height:17.5px;background:#2a2a2a;border-radius:4px;border:1px solid #404040;"></div>
<svg style="left:429.5px;top:528.5px;" width="19" height="18" viewBox="0 0 19 18"><g fill="#d8d8d8"><circle cx="4" cy="4" r="1"/><circle cx="10" cy="3.5" r="1"/><circle cx="3.5" cy="10" r="1"/><circle cx="15" cy="6" r="0.9"/><path d="M10 6.5 L11 9.5 L14 10.5 L11 11.5 L10 14.5 L9 11.5 L6 10.5 L9 9.5 Z"/></g><path d="M14 16.5 H17 V13.5 Z" fill="#2fd06c"/></svg>
<div style="left:450px;top:528.5px;width:18px;height:17.5px;background:#2a2a2a;border-radius:4px;border:1px solid #404040;"></div>
<svg style="left:450px;top:528.5px;" width="18" height="18" viewBox="0 0 18 18"><path d="M5 5 L13 13 M13 5 L5 13" stroke="#d0d0d0" stroke-width="1.2"/></svg>
<div style="left:6px;top:549px;width:468px;height:21px;background:#2b2b2b;"></div>
<div style="left:184px;top:550px;width:95px;height:20px;background:#3e3e3e;border-radius:4px 4px 0 0;"></div>
<div class="t" style="left:216px;top:552px;height:16px;line-height:16px;color:#e6e6e6;font-size:12.5px;letter-spacing:-0.35px;letter-spacing:-0.891px;">Shape</div>
<div class="t" style="left:311px;top:552px;height:16px;line-height:16px;color:#a8a8a8;font-size:12.5px;letter-spacing:-0.35px;letter-spacing:-0.545px;">Masks</div>
<div class="t" style="left:375px;top:552px;height:16px;line-height:16px;color:#a8a8a8;font-size:12.5px;">|</div>
<div class="t" style="left:398px;top:552px;height:16px;line-height:16px;color:#a8a8a8;font-size:12.5px;letter-spacing:-0.35px;letter-spacing:-0.489px;">Advanced</div>
<div style="left:8px;top:570px;width:466px;height:112px;background:#3b3b3b;border-radius:3px;"></div>
<svg style="left:13.5px;top:576.0px;" width="11" height="11" viewBox="0 0 11 11"><circle cx="5.5" cy="5.5" r="4" fill="none" stroke="#8a8a8a" stroke-width="1.1"/></svg>
<div class="t" style="left:30px;top:574px;height:16px;line-height:16px;color:#7a7a7a;font-size:12.5px;letter-spacing:-0.35px;letter-spacing:-0.223px;">Position</div>
<div style="left:177px;top:573px;width:94px;height:16px;background:#2a2a2a;border-radius:3px;"></div>
<div class="t" style="left:181px;top:573.5px;height:16px;line-height:16px;color:#6a6a6a;font-size:12.5px;">X</div>
<div class="t" style="left:194px;top:573.5px;height:16px;line-height:16px;color:#e0e0e0;font-size:12.5px;letter-spacing:-0.35px;letter-spacing:-0.330px;">0.0</div>
<div style="left:277px;top:573px;width:94px;height:16px;background:#2a2a2a;border-radius:3px;"></div>
<div class="t" style="left:281px;top:573.5px;height:16px;line-height:16px;color:#6a6a6a;font-size:12.5px;">Y</div>
<div class="t" style="left:294px;top:573.5px;height:16px;line-height:16px;color:#e0e0e0;font-size:12.5px;letter-spacing:-0.35px;letter-spacing:-0.330px;">0.0</div>
<svg style="left:13.5px;top:598.0px;" width="11" height="11" viewBox="0 0 11 11"><circle cx="5.5" cy="5.5" r="4" fill="none" stroke="#8a8a8a" stroke-width="1.1"/></svg>
<div class="t" style="left:30px;top:596px;height:16px;line-height:16px;color:#7a7a7a;font-size:12.5px;letter-spacing:-0.35px;letter-spacing:-0.108px;">Rotation</div>
<div style="left:177px;top:595px;width:94px;height:16px;background:#2a2a2a;border-radius:3px;"></div>
<div class="t" style="left:181px;top:595.5px;height:16px;line-height:16px;color:#6a6a6a;font-size:12.5px;">Z</div>
<div class="t" style="left:194px;top:595.5px;height:16px;line-height:16px;color:#e0e0e0;font-size:12.5px;letter-spacing:-0.35px;letter-spacing:-0.336px;">90.0</div>
<svg style="left:13.5px;top:620.0px;" width="11" height="11" viewBox="0 0 11 11"><circle cx="5.5" cy="5.5" r="4" fill="none" stroke="#8a8a8a" stroke-width="1.1"/></svg>
<div class="t" style="left:30px;top:618px;height:16px;line-height:16px;color:#7a7a7a;font-size:12.5px;letter-spacing:-0.35px;letter-spacing:-0.796px;">Scale</div>
<div style="left:177px;top:617px;width:94px;height:16px;background:#2a2a2a;border-radius:3px;"></div>
<div class="t" style="left:181px;top:617.5px;height:16px;line-height:16px;color:#6a6a6a;font-size:12.5px;">X</div>
<div class="t" style="left:194px;top:617.5px;height:16px;line-height:16px;color:#e0e0e0;font-size:12.5px;letter-spacing:-0.35px;letter-spacing:-0.330px;">1.0</div>
<div style="left:277px;top:617px;width:94px;height:16px;background:#2a2a2a;border-radius:3px;"></div>
<div class="t" style="left:281px;top:617.5px;height:16px;line-height:16px;color:#6a6a6a;font-size:12.5px;">Y</div>
<div class="t" style="left:294px;top:617.5px;height:16px;line-height:16px;color:#e0e0e0;font-size:12.5px;letter-spacing:-0.35px;letter-spacing:-0.330px;">1.0</div>
<svg style="left:13.5px;top:642.0px;" width="11" height="11" viewBox="0 0 11 11"><circle cx="5.5" cy="5.5" r="4" fill="none" stroke="#8a8a8a" stroke-width="1.1"/></svg>
<div class="t" style="left:30px;top:640px;height:16px;line-height:16px;color:#7a7a7a;font-size:12.5px;letter-spacing:-0.35px;letter-spacing:-0.720px;">Skew</div>
<div style="left:177px;top:639px;width:94px;height:16px;background:#2a2a2a;border-radius:3px;"></div>
<div class="t" style="left:181px;top:639.5px;height:16px;line-height:16px;color:#6a6a6a;font-size:12.5px;">X</div>
<div class="t" style="left:194px;top:639.5px;height:16px;line-height:16px;color:#e0e0e0;font-size:12.5px;letter-spacing:-0.35px;letter-spacing:-0.330px;">0.0</div>
<div style="left:277px;top:639px;width:94px;height:16px;background:#2a2a2a;border-radius:3px;"></div>
<div class="t" style="left:281px;top:639.5px;height:16px;line-height:16px;color:#6a6a6a;font-size:12.5px;">Y</div>
<div class="t" style="left:294px;top:639.5px;height:16px;line-height:16px;color:#e0e0e0;font-size:12.5px;letter-spacing:-0.35px;letter-spacing:-0.330px;">0.0</div>
<svg style="left:13.5px;top:664.0px;" width="11" height="11" viewBox="0 0 11 11"><circle cx="5.5" cy="5.5" r="4" fill="none" stroke="#8a8a8a" stroke-width="1.1"/></svg>
<div class="t" style="left:30px;top:662px;height:16px;line-height:16px;color:#7a7a7a;font-size:12.5px;letter-spacing:-0.35px;letter-spacing:-0.099px;">Pivot</div>
<div style="left:177px;top:661px;width:94px;height:16px;background:#2a2a2a;border-radius:3px;"></div>
<div class="t" style="left:181px;top:661.5px;height:16px;line-height:16px;color:#6a6a6a;font-size:12.5px;">X</div>
<div class="t" style="left:194px;top:661.5px;height:16px;line-height:16px;color:#e0e0e0;font-size:12.5px;letter-spacing:-0.35px;letter-spacing:-0.330px;">0.0</div>
<div style="left:277px;top:661px;width:94px;height:16px;background:#2a2a2a;border-radius:3px;"></div>
<div class="t" style="left:281px;top:661.5px;height:16px;line-height:16px;color:#6a6a6a;font-size:12.5px;">Y</div>
<div class="t" style="left:294px;top:661.5px;height:16px;line-height:16px;color:#e0e0e0;font-size:12.5px;letter-spacing:-0.35px;letter-spacing:-0.330px;">0.0</div>
<div style="left:377px;top:617px;width:15px;height:16px;background:#2a2a2a;border-radius:4px;"></div>
<svg style="left:377px;top:617px;" width="15" height="16" viewBox="0 0 15 16"><path d="M5 6.5 V5.5 Q5 3.5 7.5 3.5 Q10 3.5 10 5.5 V6.5 M5 9.5 V10.5 Q5 12.5 7.5 12.5 Q10 12.5 10 10.5 V9.5" fill="none" stroke="#b0b0b0" stroke-width="1.1"/></svg>
<div style="left:8px;top:682px;width:466px;height:1px;background:#2a2a2a;"></div>
<svg style="left:13.5px;top:690.5px;" width="11" height="11" viewBox="0 0 11 11"><circle cx="5.5" cy="5.5" r="4" fill="none" stroke="#8e8e8e" stroke-width="1.1"/></svg>
<div class="t" style="left:30px;top:688.5px;height:16px;line-height:16px;color:#e0e0e0;font-size:12.5px;letter-spacing:-0.35px;letter-spacing:-0.199px;">Opacity</div>
<div style="left:177px;top:694px;width:190px;height:4px;background:#e0e0e0;border-radius:2px;"></div>
<svg style="left:359px;top:690px;" width="12" height="12" viewBox="0 0 12 12"><circle cx="6" cy="6" r="5" fill="#57b89c"/><circle cx="6" cy="6" r="2.6" fill="#7fd6ba"/></svg>
<div style="left:377px;top:688px;width:94px;height:16px;background:#2a2a2a;border-radius:3px;"></div>
<div class="t" style="left:381px;top:688.5px;height:16px;line-height:16px;color:#6a6a6a;font-size:12.5px;">%</div>
<div class="t" style="left:394px;top:688.5px;height:16px;line-height:16px;color:#e0e0e0;font-size:12.5px;letter-spacing:-0.35px;letter-spacing:-0.256px;">100.0</div>
<svg style="left:13.5px;top:712.5px;" width="11" height="11" viewBox="0 0 11 11"><circle cx="5.5" cy="5.5" r="4" fill="none" stroke="#8e8e8e" stroke-width="1.1"/></svg>
<div class="t" style="left:30px;top:710.5px;height:16px;line-height:16px;color:#e0e0e0;font-size:12.5px;letter-spacing:-0.35px;letter-spacing:-0.342px;">Blend Mode</div>
<div style="left:177px;top:711px;width:193px;height:14px;background:#4f4f4f;border-radius:3px;"></div>
<div class="t" style="left:180px;top:711px;height:16px;line-height:16px;color:#e8e8e8;font-size:12.5px;letter-spacing:-0.35px;letter-spacing:-0.216px;">Normal</div>
<svg style="left:356px;top:714px;" width="12" height="9" viewBox="0 0 12 9"><path d="M1.5 1.5 L6 6 L10.5 1.5" fill="none" stroke="#c8c8c8" stroke-width="1.1"/></svg>
<div class="t" style="left:30px;top:732.5px;height:16px;line-height:16px;color:#7a7a7a;font-size:12.5px;letter-spacing:-0.35px;letter-spacing:-0.183px;">Deformers</div>
<div style="left:177px;top:732px;width:94px;height:16px;background:#363636;border-radius:3px;"></div>
<svg style="left:179px;top:735px;" width="12" height="11" viewBox="0 0 12 11"><path d="M1 2 H10 M1 5.5 H8 M1 9 H10" stroke="#777" stroke-width="1.1"/></svg>
<div class="t" style="left:193px;top:732.5px;height:16px;line-height:16px;color:#7a7a7a;font-size:12.5px;">0</div>
<div class="t" style="left:30px;top:754.5px;height:16px;line-height:16px;color:#7a7a7a;font-size:12.5px;letter-spacing:-0.35px;letter-spacing:-0.104px;">Filters</div>
<div style="left:177px;top:754px;width:94px;height:16px;background:#363636;border-radius:3px;"></div>
<svg style="left:179px;top:757px;" width="12" height="11" viewBox="0 0 12 11"><path d="M1 2 H10 M1 5.5 H8 M1 9 H10" stroke="#777" stroke-width="1.1"/></svg>
<div class="t" style="left:193px;top:754.5px;height:16px;line-height:16px;color:#7a7a7a;font-size:12.5px;">0</div>
<div style="left:273px;top:732px;width:16px;height:16px;background:#222;border-radius:4px;"></div>
<svg style="left:273px;top:732px;" width="16" height="16" viewBox="0 0 16 16"><path d="M8 4 V12 M4 8 H12" stroke="#e0e0e0" stroke-width="1.6"/><path d="M12 15 H15 V12 Z" fill="#2fd06c"/></svg>
<div style="left:273px;top:754px;width:16px;height:16px;background:#222;border-radius:4px;"></div>
<svg style="left:273px;top:754px;" width="16" height="16" viewBox="0 0 16 16"><path d="M8 4 V12 M4 8 H12" stroke="#e0e0e0" stroke-width="1.6"/><path d="M12 15 H15 V12 Z" fill="#2fd06c"/></svg>
<div style="left:398px;top:732px;width:16px;height:16px;background:#222;border-radius:4px;"></div>
<svg style="left:398px;top:732px;" width="16" height="16" viewBox="0 0 16 16"><path d="M3 4.5 H13 M3 8 H13 M3 11.5 H13" stroke="#9fe07f" stroke-width="2"/></svg>
<div style="left:416px;top:732px;width:16px;height:16px;background:#222;border-radius:4px;"></div>
<svg style="left:416px;top:732px;" width="16" height="16" viewBox="0 0 16 16"><path d="M3 3 V13 H13" stroke="#b0b0b0" stroke-width="1.1" fill="none"/><path d="M5 11 L11 5 M8 4.5 H11.5 V8" stroke="#5fd38a" stroke-width="1.2" fill="none"/></svg>
<div style="left:434px;top:732px;width:16px;height:16px;background:#222;border-radius:4px;"></div>
<svg style="left:434px;top:732px;" width="16" height="16" viewBox="0 0 16 16"><path d="M2 8 Q4.5 1 7.5 8 T13.5 8" stroke="#5fd38a" stroke-width="1.4" fill="none"/><circle cx="3" cy="9" r="1.5" fill="#d0d0d0"/><circle cx="12.5" cy="8" r="1.5" fill="#d0d0d0"/></svg>
<div style="left:452px;top:731px;width:1px;height:18px;background:#888;"></div>
<div style="left:455px;top:732px;width:17px;height:16px;background:#222;border-radius:4px;"></div>
<svg style="left:455px;top:732px;" width="17" height="16" viewBox="0 0 17 16"><path d="M2 8 Q3.5 1 5.5 8 T9 8 T12.5 8 T15 6" stroke="#2fd06c" stroke-width="1.5" fill="none"/></svg>
<div style="left:456px;top:755px;width:15px;height:15px;background:#222;border-radius:3px;"></div>
<svg style="left:456px;top:755px;" width="15" height="15" viewBox="0 0 15 15"><rect x="2.5" y="2.5" width="10" height="10" fill="none" stroke="#c0c0c0" stroke-width="1"/><circle cx="7.5" cy="7.5" r="3.2" fill="#f08aa0"/></svg>
<svg style="left:13.5px;top:778.5px;" width="11" height="11" viewBox="0 0 11 11"><circle cx="5.5" cy="5.5" r="4" fill="none" stroke="#8e8e8e" stroke-width="1.1"/></svg>
<div class="t" style="left:30px;top:776.5px;height:16px;line-height:16px;color:#e0e0e0;font-size:12.5px;letter-spacing:-0.35px;letter-spacing:-0.049px;">Motion Blur</div>
<div style="left:177px;top:777px;width:193px;height:14px;background:#4f4f4f;border-radius:3px;"></div>
<div class="t" style="left:180px;top:777px;height:16px;line-height:16px;color:#e8e8e8;font-size:12.5px;letter-spacing:-0.35px;letter-spacing:-0.423px;">None</div>
<svg style="left:356px;top:780px;" width="12" height="9" viewBox="0 0 12 9"><path d="M1.5 1.5 L6 6 L10.5 1.5" fill="none" stroke="#c8c8c8" stroke-width="1.1"/></svg>
<div style="left:8px;top:797px;width:466px;height:1px;background:#2a2a2a;"></div>
<div style="left:6px;top:798px;width:470px;height:231px;background:#333;"></div>
<div style="left:8px;top:799px;width:466px;height:23px;background:#434343;"></div>
<div style="left:273px;top:803px;width:16px;height:16px;background:#222;border-radius:4px;"></div>
<svg style="left:273px;top:803px;" width="16" height="16" viewBox="0 0 16 16"><path d="M8 4 V12 M4 8 H12" stroke="#e0e0e0" stroke-width="1.6"/><path d="M12 15 H15 V12 Z" fill="#2fd06c"/></svg>
<div class="t" style="left:30px;top:803.5px;height:16px;line-height:16px;color:#7a7a7a;font-size:12.5px;letter-spacing:-0.35px;letter-spacing:-0.531px;">Input Shapes</div>
<div style="left:177px;top:803px;width:94px;height:16px;background:#3a3a3a;border-radius:3px;"></div>
<svg style="left:179px;top:806px;" width="12" height="11" viewBox="0 0 12 11"><path d="M1 2 H10 M1 5.5 H8 M1 9 H10" stroke="#8a8a8a" stroke-width="1.1"/></svg>
<div class="t" style="left:194px;top:803.5px;height:16px;line-height:16px;color:#9c8d4e;font-size:12.5px;">1</div>
<svg style="left:252px;top:807px;" width="20" height="8" viewBox="0 0 20 8"><path d="M0.5 4 L4 1 H6 V7 H4 Z" fill="#a3904a"/><path d="M17.5 4 L14 1 H12 V7 H14 Z" fill="#6a6a6a"/></svg>
<div class="t" style="left:30px;top:827.5px;height:16px;line-height:16px;color:#7a7a7a;font-size:12.5px;letter-spacing:-0.35px;letter-spacing:0.089px;">Distribution</div>
<div style="left:177px;top:828px;width:194px;height:14px;background:#3b3b3b;border-radius:3px;"></div>
<div class="t" style="left:180px;top:828px;height:16px;line-height:16px;color:#e8e8e8;font-size:12.5px;letter-spacing:-0.35px;"></div>
<svg style="left:357px;top:831px;" width="12" height="9" viewBox="0 0 12 9"><path d="M1.5 1.5 L6 6 L10.5 1.5" fill="none" stroke="#8a8a8a" stroke-width="1.1"/></svg>
<svg style="left:180px;top:829px;" width="11" height="12" viewBox="0 0 11 12"><path d="M9 2 H2 V5.5 H9 V9.5 H2" fill="none" stroke="#b0b0b0" stroke-width="1.2"/></svg>
<div class="t" style="left:196px;top:827.5px;height:16px;line-height:16px;color:#8a8a8a;font-size:12.5px;letter-spacing:-0.35px;letter-spacing:-0.159px;">Sort</div>
<div style="left:26px;top:848px;width:448px;height:116px;background:#3a3a3a;border-radius:3px;"></div>
<div class="t" style="left:46px;top:851.5px;height:16px;line-height:16px;color:#7a7a7a;font-size:12.5px;letter-spacing:-0.35px;letter-spacing:0.010px;">Input Distribution</div>
<div style="left:177px;top:852px;width:194px;height:14px;background:#424242;border-radius:3px;"></div>
<div class="t" style="left:180px;top:852px;height:16px;line-height:16px;color:#e8e8e8;font-size:12.5px;letter-spacing:-0.35px;"></div>
<svg style="left:357px;top:855px;" width="12" height="9" viewBox="0 0 12 9"><path d="M1.5 1.5 L6 6 L10.5 1.5" fill="none" stroke="#8a8a8a" stroke-width="1.1"/></svg>
<div class="t" style="left:180px;top:849.5px;height:16px;line-height:16px;color:#c0c0c0;font-size:14px;letter-spacing:0.5px;font-weight:bold;">···</div>
<div class="t" style="left:196px;top:851.5px;height:16px;line-height:16px;color:#8a8a8a;font-size:12.5px;letter-spacing:-0.35px;letter-spacing:-0.342px;">Linear</div>
<svg style="left:45.5px;top:875.5px;" width="11" height="11" viewBox="0 0 11 11"><circle cx="5.5" cy="5.5" r="4" fill="none" stroke="#a0a0a0" stroke-width="1.1"/></svg>
<div class="t" style="left:62px;top:873.5px;height:16px;line-height:16px;color:#e0e0e0;font-size:12.5px;letter-spacing:-0.35px;letter-spacing:-0.212px;">Count</div>
<div style="left:177px;top:873px;width:94px;height:16px;background:#303030;border-radius:3px;"></div>
<div class="t" style="left:182px;top:873.5px;height:16px;line-height:16px;color:#6a6a6a;font-size:12.5px;">#</div>
<div class="t" style="left:194px;top:873.5px;height:16px;line-height:16px;color:#e0e0e0;font-size:12.5px;letter-spacing:-0.35px;letter-spacing:0.047px;">60</div>
<div style="left:38px;top:893px;width:434px;height:20px;background:#4a4a4a;border-radius:3px;"></div>
<svg style="left:45.5px;top:897.5px;" width="11" height="11" viewBox="0 0 11 11"><circle cx="5.5" cy="5.5" r="4" fill="none" stroke="#4ab0f0" stroke-width="1.1"/><circle cx="5.5" cy="5.5" r="2" fill="#4ab0f0"/></svg>
<div class="t" style="left:62px;top:895.5px;height:16px;line-height:16px;color:#4ab0f0;font-size:12.5px;letter-spacing:-0.35px;letter-spacing:-0.907px;">Size</div>
<div class="t" style="left:194px;top:895.5px;height:16px;line-height:16px;color:#a3904a;font-size:12.5px;letter-spacing:-0.35px;letter-spacing:-0.212px;">42000.0</div>
<svg style="left:252px;top:899px;" width="20" height="8" viewBox="0 0 20 8"><path d="M0.5 4 L4 1 H6 V7 H4 Z" fill="#a3904a"/><path d="M17.5 4 L14 1 H12 V7 H14 Z" fill="#6a6a6a"/></svg>
<svg style="left:45.5px;top:919.5px;" width="11" height="11" viewBox="0 0 11 11"><circle cx="5.5" cy="5.5" r="4" fill="none" stroke="#a0a0a0" stroke-width="1.1"/></svg>
<div class="t" style="left:62px;top:917.5px;height:16px;line-height:16px;color:#e0e0e0;font-size:12.5px;letter-spacing:-0.35px;letter-spacing:-0.003px;">Direction</div>
<div style="left:177px;top:918px;width:193px;height:14px;background:#4f4f4f;border-radius:3px;"></div>
<div class="t" style="left:180px;top:918px;height:16px;line-height:16px;color:#e8e8e8;font-size:12.5px;letter-spacing:-0.35px;letter-spacing:-0.075px;">Vertical</div>
<svg style="left:356px;top:921px;" width="12" height="9" viewBox="0 0 12 9"><path d="M1.5 1.5 L6 6 L10.5 1.5" fill="none" stroke="#c8c8c8" stroke-width="1.1"/></svg>
<svg style="left:45.5px;top:941.5px;" width="11" height="11" viewBox="0 0 11 11"><circle cx="5.5" cy="5.5" r="4" fill="none" stroke="#a0a0a0" stroke-width="1.1"/></svg>
<div class="t" style="left:62px;top:939.5px;height:16px;line-height:16px;color:#e0e0e0;font-size:12.5px;letter-spacing:-0.35px;letter-spacing:-0.562px;">Size Mode</div>
<div style="left:177px;top:940px;width:193px;height:14px;background:#4f4f4f;border-radius:3px;"></div>
<div class="t" style="left:180px;top:940px;height:16px;line-height:16px;color:#e8e8e8;font-size:12.5px;letter-spacing:-0.35px;letter-spacing:-0.064px;">Fit</div>
<svg style="left:356px;top:943px;" width="12" height="9" viewBox="0 0 12 9"><path d="M1.5 1.5 L6 6 L10.5 1.5" fill="none" stroke="#c8c8c8" stroke-width="1.1"/></svg>
<svg style="left:29.5px;top:969.5px;" width="11" height="11" viewBox="0 0 11 11"><circle cx="5.5" cy="5.5" r="4" fill="none" stroke="#a0a0a0" stroke-width="1.1"/></svg>
<div class="t" style="left:46px;top:967.5px;height:16px;line-height:16px;color:#e0e0e0;font-size:12.5px;letter-spacing:-0.35px;letter-spacing:-0.245px;">Mode</div>
<div style="left:177px;top:968px;width:193px;height:14px;background:#4f4f4f;border-radius:3px;"></div>
<div class="t" style="left:180px;top:968px;height:16px;line-height:16px;color:#e8e8e8;font-size:12.5px;letter-spacing:-0.35px;letter-spacing:-0.318px;">Distance From Centroid</div>
<svg style="left:356px;top:971px;" width="12" height="9" viewBox="0 0 12 9"><path d="M1.5 1.5 L6 6 L10.5 1.5" fill="none" stroke="#c8c8c8" stroke-width="1.1"/></svg>
<svg style="left:29.5px;top:991.5px;" width="11" height="11" viewBox="0 0 11 11"><circle cx="5.5" cy="5.5" r="4" fill="none" stroke="#8a8a8a" stroke-width="1.1"/></svg>
<div class="t" style="left:46px;top:989.5px;height:16px;line-height:16px;color:#7a7a7a;font-size:12.5px;letter-spacing:-0.35px;letter-spacing:-0.292px;">Target</div>
<div style="left:177px;top:989px;width:294px;height:16px;background:#383838;border-radius:3px;"></div>
<div class="t" style="left:181px;top:989.5px;height:16px;line-height:16px;color:#555;font-size:12.5px;">C</div>
<div class="t" style="left:194px;top:989.5px;height:16px;line-height:16px;color:#6a6a6a;font-size:12.5px;letter-spacing:-0.35px;letter-spacing:-0.331px;">No Connection</div>
<svg style="left:29.5px;top:1013.5px;" width="11" height="11" viewBox="0 0 11 11"><circle cx="5.5" cy="5.5" r="4" fill="none" stroke="#a0a0a0" stroke-width="1.1"/></svg>
<div class="t" style="left:46px;top:1011.5px;height:16px;line-height:16px;color:#e0e0e0;font-size:12.5px;letter-spacing:-0.35px;letter-spacing:-0.607px;">Reverse</div>
<div style="left:177px;top:1011px;width:16px;height:16px;background:#2a2a2a;border-radius:3px;"></div>
<div style="left:0px;top:1025px;width:1920px;height:4px;background:#1a1a1a;"></div>
<div style="left:494px;top:85px;width:30px;height:495px;background:#464646;"></div>
<div style="left:503px;top:89px;width:2px;height:2px;background:#8a8a8a;"></div>
<div style="left:509px;top:89px;width:2px;height:2px;background:#8a8a8a;"></div>
<div style="left:515px;top:89px;width:2px;height:2px;background:#8a8a8a;"></div>
<div style="left:495px;top:96px;width:28px;height:28px;background:#1c1c1c;border-radius:4px;"></div>
<svg style="left:495px;top:96px;" width="28" height="28" viewBox="0 0 28 28"><path d="M5.5 2 V18.5 L9.5 15 L12 21 L15 19.7 L12.3 14 H18 Z" fill="none" stroke="#2fd06c" stroke-width="1.4" transform="translate(3,1)"/></svg>
<svg style="left:495px;top:126px;" width="28" height="28" viewBox="0 0 28 28"><path d="M8 3 L22 15 L14 16 L8 23 Z" fill="#dcdcdc"/></svg>
<svg style="left:495px;top:156px;" width="28" height="28" viewBox="0 0 28 28"><path d="M6 5 L16 8 L21 16 L17 20 L9 15 Z" fill="#dcdcdc"/><path d="M6 5 L14 13" stroke="#464646" stroke-width="1.2"/><circle cx="14.5" cy="13.5" r="1.6" fill="#464646"/><path d="M17.5 21.5 L22.5 16.5 L24 18 L19 23 Z" fill="#dcdcdc"/></svg>
<svg style="left:495px;top:186px;" width="28" height="28" viewBox="0 0 28 28"><path d="M6 21 L7 17 L19 5 L22 8 L10 20 Z" fill="#dcdcdc"/><circle cx="21.5" cy="5.5" r="2.2" fill="#dcdcdc"/><path d="M4.5 23 L6 21.5" stroke="#dcdcdc" stroke-width="1.2"/></svg>
<svg style="left:495px;top:216px;" width="28" height="28" viewBox="0 0 28 28"><rect x="4" y="9" width="14" height="11" rx="1.5" fill="#dcdcdc"/><path d="M18.5 14.5 L25 10 V19 Z" fill="#dcdcdc"/><rect x="6" y="6.5" width="6" height="1.6" fill="#dcdcdc"/><circle cx="7.5" cy="12" r="1.2" fill="#464646"/></svg>
<svg style="left:495px;top:246px;" width="28" height="28" viewBox="0 0 28 28"><path d="M6 22 L22 6" stroke="#dcdcdc" stroke-width="1.3"/></svg>
<svg style="left:495px;top:276px;" width="28" height="28" viewBox="0 0 28 28"><path d="M7 6 H21 V9.5 H15.8 V22 H12.2 V9.5 H7 Z" fill="#dcdcdc"/></svg>
<svg style="left:495px;top:306px;" width="28" height="28" viewBox="0 0 28 28"><path d="M6 5 L15 9.5 L10 11 L7.5 15 Z" fill="#dcdcdc"/><path d="M16 6 H21 L23 22 H6 L6.5 17" fill="none" stroke="#dcdcdc" stroke-width="1.2" stroke-dasharray="4 2.5"/><g fill="#dcdcdc"><rect x="20" y="4.5" width="2.5" height="2.5"/><rect x="21.8" y="20.8" width="2.5" height="2.5"/><rect x="4.8" y="20.8" width="2.5" height="2.5"/></g></svg>
<svg style="left:495px;top:336px;" width="28" height="28" viewBox="0 0 28 28"><rect x="8.5" y="8.5" width="11" height="11" fill="#dcdcdc"/></svg>
<svg style="left:495px;top:366px;" width="28" height="28" viewBox="0 0 28 28"><circle cx="14" cy="14" r="6.3" fill="#dcdcdc"/></svg>
<svg style="left:495px;top:396px;" width="28" height="28" viewBox="0 0 28 28"><path d="M14 7.2 L21 12.3 L18.3 20.5 H9.7 L7 12.3 Z" fill="#dcdcdc"/></svg>
<svg style="left:495px;top:426px;" width="28" height="28" viewBox="0 0 28 28"><path d="M14 6.5 L16 12 L22 12.2 L17.3 15.8 L19 21.5 L14 18.2 L9 21.5 L10.7 15.8 L6 12.2 L12 12 Z" fill="#dcdcdc"/></svg>
<svg style="left:495px;top:456px;" width="28" height="28" viewBox="0 0 28 28"><path d="M10.5 19 A6 6 0 1 1 19.5 15.5" fill="none" stroke="#dcdcdc" stroke-width="2.6"/></svg>
<svg style="left:495px;top:486px;" width="28" height="28" viewBox="0 0 28 28"><path d="M14 6 Q15 13 22 14 Q15 15 14 22 Q13 15 6 14 Q13 13 14 6 Z" fill="#dcdcdc"/></svg>
<svg style="left:495px;top:516px;" width="28" height="28" viewBox="0 0 28 28"><path d="M21.46 13.26 L21.46 14.74 L19.31 15.61 L18.89 16.62 L19.80 18.76 L18.76 19.80 L16.62 18.89 L15.61 19.31 L14.74 21.46 L13.26 21.46 L12.39 19.31 L11.38 18.89 L9.24 19.80 L8.20 18.76 L9.11 16.62 L8.69 15.61 L6.54 14.74 L6.54 13.26 L8.69 12.39 L9.11 11.38 L8.20 9.24 L9.24 8.20 L11.38 9.11 L12.39 8.69 L13.26 6.54 L14.74 6.54 L15.61 8.69 L16.62 9.11 L18.76 8.20 L19.80 9.24 L18.89 11.38 L19.31 12.39 Z" fill="#dcdcdc"/><circle cx="14" cy="14" r="2.70" fill="#464646"/></svg>
<svg style="left:500px;top:564px;" width="18" height="13" viewBox="0 0 18 13"><path d="M3 2 L8 6.5 L3 11 M9 2 L14 6.5 L9 11" fill="none" stroke="#c8c8c8" stroke-width="1.3"/></svg>
<div style="left:530px;top:85px;width:87px;height:23px;background:#464646;border-radius:4px 4px 0 0;"></div>
<div class="t" style="left:535px;top:88.5px;height:16px;line-height:16px;color:#e6e6e6;font-size:12.5px;letter-spacing:-0.35px;letter-spacing:-0.285px;">Composition 1</div>
<div style="left:530px;top:107px;width:1057px;height:473px;background:#464646;"></div>
<div style="left:550px;top:127px;width:1037px;height:431px;background:#000;"></div>
<div style="left:703px;top:137px;width:729.5px;height:410px;background:#fff;"></div>
<svg style="left:0px;top:0px;overflow:visible;" width="1920" height="130" viewBox="0 0 1920 130"><path d="M555.5 119 V127" stroke="#8a8a8a" stroke-width="1"/><path d="M566.5 123 V127" stroke="#8a8a8a" stroke-width="1"/><path d="M578.5 123 V127" stroke="#8a8a8a" stroke-width="1"/><path d="M589.5 123 V127" stroke="#8a8a8a" stroke-width="1"/><path d="M601.5 123 V127" stroke="#8a8a8a" stroke-width="1"/><path d="M612.5 119 V127" stroke="#8a8a8a" stroke-width="1"/><path d="M623.5 123 V127" stroke="#8a8a8a" stroke-width="1"/><path d="M635.5 123 V127" stroke="#8a8a8a" stroke-width="1"/><path d="M646.5 123 V127" stroke="#8a8a8a" stroke-width="1"/><path d="M658.5 123 V127" stroke="#8a8a8a" stroke-width="1"/><path d="M669.5 119 V127" stroke="#8a8a8a" stroke-width="1"/><path d="M680.5 123 V127" stroke="#8a8a8a" stroke-width="1"/><path d="M692.5 123 V127" stroke="#8a8a8a" stroke-width="1"/><path d="M703.5 123 V127" stroke="#8a8a8a" stroke-width="1"/><path d="M715.5 123 V127" stroke="#8a8a8a" stroke-width="1"/><path d="M726.5 119 V127" stroke="#8a8a8a" stroke-width="1"/><path d="M737.5 123 V127" stroke="#8a8a8a" stroke-width="1"/><path d="M749.5 123 V127" stroke="#8a8a8a" stroke-width="1"/><path d="M760.5 123 V127" stroke="#8a8a8a" stroke-width="1"/><path d="M772.5 123 V127" stroke="#8a8a8a" stroke-width="1"/><path d="M783.5 119 V127" stroke="#8a8a8a" stroke-width="1"/><path d="M794.5 123 V127" stroke="#8a8a8a" stroke-width="1"/><path d="M806.5 123 V127" stroke="#8a8a8a" stroke-width="1"/><path d="M817.5 123 V127" stroke="#8a8a8a" stroke-width="1"/><path d="M829.5 123 V127" stroke="#8a8a8a" stroke-width="1"/><path d="M840.5 119 V127" stroke="#8a8a8a" stroke-width="1"/><path d="M851.5 123 V127" stroke="#8a8a8a" stroke-width="1"/><path d="M863.5 123 V127" stroke="#8a8a8a" stroke-width="1"/><path d="M874.5 123 V127" stroke="#8a8a8a" stroke-width="1"/><path d="M886.5 123 V127" stroke="#8a8a8a" stroke-width="1"/><path d="M897.5 119 V127" stroke="#8a8a8a" stroke-width="1"/><path d="M908.5 123 V127" stroke="#8a8a8a" stroke-width="1"/><path d="M920.5 123 V127" stroke="#8a8a8a" stroke-width="1"/><path d="M931.5 123 V127" stroke="#8a8a8a" stroke-width="1"/><path d="M943.5 123 V127" stroke="#8a8a8a" stroke-width="1"/><path d="M954.5 119 V127" stroke="#8a8a8a" stroke-width="1"/><path d="M965.5 123 V127" stroke="#8a8a8a" stroke-width="1"/><path d="M977.5 123 V127" stroke="#8a8a8a" stroke-width="1"/><path d="M988.5 123 V127" stroke="#8a8a8a" stroke-width="1"/><path d="M1000.5 123 V127" stroke="#8a8a8a" stroke-width="1"/><path d="M1011.5 119 V127" stroke="#8a8a8a" stroke-width="1"/><path d="M1022.5 123 V127" stroke="#8a8a8a" stroke-width="1"/><path d="M1034.5 123 V127" stroke="#8a8a8a" stroke-width="1"/><path d="M1045.5 123 V127" stroke="#8a8a8a" stroke-width="1"/><path d="M1057.5 123 V127" stroke="#8a8a8a" stroke-width="1"/><path d="M1068.5 119 V127" stroke="#8a8a8a" stroke-width="1"/><path d="M1079.5 123 V127" stroke="#8a8a8a" stroke-width="1"/><path d="M1091.5 123 V127" stroke="#8a8a8a" stroke-width="1"/><path d="M1102.5 123 V127" stroke="#8a8a8a" stroke-width="1"/><path d="M1114.5 123 V127" stroke="#8a8a8a" stroke-width="1"/><path d="M1125.5 119 V127" stroke="#8a8a8a" stroke-width="1"/><path d="M1136.5 123 V127" stroke="#8a8a8a" stroke-width="1"/><path d="M1148.5 123 V127" stroke="#8a8a8a" stroke-width="1"/><path d="M1159.5 123 V127" stroke="#8a8a8a" stroke-width="1"/><path d="M1171.5 123 V127" stroke="#8a8a8a" stroke-width="1"/><path d="M1182.5 119 V127" stroke="#8a8a8a" stroke-width="1"/><path d="M1193.5 123 V127" stroke="#8a8a8a" stroke-width="1"/><path d="M1205.5 123 V127" stroke="#8a8a8a" stroke-width="1"/><path d="M1216.5 123 V127" stroke="#8a8a8a" stroke-width="1"/><path d="M1228.5 123 V127" stroke="#8a8a8a" stroke-width="1"/><path d="M1239.5 119 V127" stroke="#8a8a8a" stroke-width="1"/><path d="M1250.5 123 V127" stroke="#8a8a8a" stroke-width="1"/><path d="M1262.5 123 V127" stroke="#8a8a8a" stroke-width="1"/><path d="M1273.5 123 V127" stroke="#8a8a8a" stroke-width="1"/><path d="M1285.5 123 V127" stroke="#8a8a8a" stroke-width="1"/><path d="M1296.5 119 V127" stroke="#8a8a8a" stroke-width="1"/><path d="M1307.5 123 V127" stroke="#8a8a8a" stroke-width="1"/><path d="M1319.5 123 V127" stroke="#8a8a8a" stroke-width="1"/><path d="M1330.5 123 V127" stroke="#8a8a8a" stroke-width="1"/><path d="M1342.5 123 V127" stroke="#8a8a8a" stroke-width="1"/><path d="M1353.5 119 V127" stroke="#8a8a8a" stroke-width="1"/><path d="M1364.5 123 V127" stroke="#8a8a8a" stroke-width="1"/><path d="M1376.5 123 V127" stroke="#8a8a8a" stroke-width="1"/><path d="M1387.5 123 V127" stroke="#8a8a8a" stroke-width="1"/><path d="M1399.5 123 V127" stroke="#8a8a8a" stroke-width="1"/><path d="M1410.5 119 V127" stroke="#8a8a8a" stroke-width="1"/><path d="M1421.5 123 V127" stroke="#8a8a8a" stroke-width="1"/><path d="M1433.5 123 V127" stroke="#8a8a8a" stroke-width="1"/><path d="M1444.5 123 V127" stroke="#8a8a8a" stroke-width="1"/><path d="M1456.5 123 V127" stroke="#8a8a8a" stroke-width="1"/><path d="M1467.5 119 V127" stroke="#8a8a8a" stroke-width="1"/><path d="M1478.5 123 V127" stroke="#8a8a8a" stroke-width="1"/><path d="M1490.5 123 V127" stroke="#8a8a8a" stroke-width="1"/><path d="M1501.5 123 V127" stroke="#8a8a8a" stroke-width="1"/><path d="M1513.5 123 V127" stroke="#8a8a8a" stroke-width="1"/><path d="M1524.5 119 V127" stroke="#8a8a8a" stroke-width="1"/><path d="M1535.5 123 V127" stroke="#8a8a8a" stroke-width="1"/><path d="M1547.5 123 V127" stroke="#8a8a8a" stroke-width="1"/><path d="M1558.5 123 V127" stroke="#8a8a8a" stroke-width="1"/><path d="M1570.5 123 V127" stroke="#8a8a8a" stroke-width="1"/><path d="M1581.5 119 V127" stroke="#8a8a8a" stroke-width="1"/></svg>
<div class="t" style="left:582.0px;top:107px;width:60px;text-align:center;height:14px;line-height:14px;color:#b4b4b4;font-size:11px;letter-spacing:-0.1px;">-1200</div>
<div class="t" style="left:639.0px;top:107px;width:60px;text-align:center;height:14px;line-height:14px;color:#b4b4b4;font-size:11px;letter-spacing:-0.1px;">-1050</div>
<div class="t" style="left:696.0px;top:107px;width:60px;text-align:center;height:14px;line-height:14px;color:#b4b4b4;font-size:11px;letter-spacing:-0.1px;">-900</div>
<div class="t" style="left:753.0px;top:107px;width:60px;text-align:center;height:14px;line-height:14px;color:#b4b4b4;font-size:11px;letter-spacing:-0.1px;">-750</div>
<div class="t" style="left:810.0px;top:107px;width:60px;text-align:center;height:14px;line-height:14px;color:#b4b4b4;font-size:11px;letter-spacing:-0.1px;">-600</div>
<div class="t" style="left:867.0px;top:107px;width:60px;text-align:center;height:14px;line-height:14px;color:#b4b4b4;font-size:11px;letter-spacing:-0.1px;">-450</div>
<div class="t" style="left:924.0px;top:107px;width:60px;text-align:center;height:14px;line-height:14px;color:#b4b4b4;font-size:11px;letter-spacing:-0.1px;">-300</div>
<div class="t" style="left:981.0px;top:107px;width:60px;text-align:center;height:14px;line-height:14px;color:#b4b4b4;font-size:11px;letter-spacing:-0.1px;">-150</div>
<div class="t" style="left:1038.0px;top:107px;width:60px;text-align:center;height:14px;line-height:14px;color:#b4b4b4;font-size:11px;letter-spacing:-0.1px;">0</div>
<div class="t" style="left:1095.0px;top:107px;width:60px;text-align:center;height:14px;line-height:14px;color:#b4b4b4;font-size:11px;letter-spacing:-0.1px;">150</div>
<div class="t" style="left:1152.0px;top:107px;width:60px;text-align:center;height:14px;line-height:14px;color:#b4b4b4;font-size:11px;letter-spacing:-0.1px;">300</div>
<div class="t" style="left:1209.0px;top:107px;width:60px;text-align:center;height:14px;line-height:14px;color:#b4b4b4;font-size:11px;letter-spacing:-0.1px;">450</div>
<div class="t" style="left:1266.0px;top:107px;width:60px;text-align:center;height:14px;line-height:14px;color:#b4b4b4;font-size:11px;letter-spacing:-0.1px;">600</div>
<div class="t" style="left:1323.0px;top:107px;width:60px;text-align:center;height:14px;line-height:14px;color:#b4b4b4;font-size:11px;letter-spacing:-0.1px;">750</div>
<div class="t" style="left:1380.0px;top:107px;width:60px;text-align:center;height:14px;line-height:14px;color:#b4b4b4;font-size:11px;letter-spacing:-0.1px;">900</div>
<div class="t" style="left:1437.0px;top:107px;width:60px;text-align:center;height:14px;line-height:14px;color:#b4b4b4;font-size:11px;letter-spacing:-0.1px;">1050</div>
<div class="t" style="left:1494.0px;top:107px;width:60px;text-align:center;height:14px;line-height:14px;color:#b4b4b4;font-size:11px;letter-spacing:-0.1px;">1200</div>
<div class="t" style="left:1571px;top:107px;height:14px;line-height:14px;color:#b4b4b4;font-size:11px;width:16px;overflow:hidden;letter-spacing:-0.1px;">135</div>
<div class="t" style="left:535px;top:109px;height:16px;line-height:16px;color:#b4b4b4;font-size:11px;">px</div>
<svg style="left:0px;top:0px;overflow:visible;" width="600" height="600" viewBox="0 0 600 600"><path d="M546 547.5 H550" stroke="#8a8a8a" stroke-width="1"/><path d="M546 536.5 H550" stroke="#8a8a8a" stroke-width="1"/><path d="M546 524.5 H550" stroke="#8a8a8a" stroke-width="1"/><path d="M543 513.5 H550" stroke="#8a8a8a" stroke-width="1"/><path d="M546 502.5 H550" stroke="#8a8a8a" stroke-width="1"/><path d="M546 490.5 H550" stroke="#8a8a8a" stroke-width="1"/><path d="M546 479.5 H550" stroke="#8a8a8a" stroke-width="1"/><path d="M546 467.5 H550" stroke="#8a8a8a" stroke-width="1"/><path d="M543 456.5 H550" stroke="#8a8a8a" stroke-width="1"/><path d="M546 445.5 H550" stroke="#8a8a8a" stroke-width="1"/><path d="M546 433.5 H550" stroke="#8a8a8a" stroke-width="1"/><path d="M546 422.5 H550" stroke="#8a8a8a" stroke-width="1"/><path d="M546 410.5 H550" stroke="#8a8a8a" stroke-width="1"/><path d="M543 399.5 H550" stroke="#8a8a8a" stroke-width="1"/><path d="M546 388.5 H550" stroke="#8a8a8a" stroke-width="1"/><path d="M546 376.5 H550" stroke="#8a8a8a" stroke-width="1"/><path d="M546 365.5 H550" stroke="#8a8a8a" stroke-width="1"/><path d="M546 353.5 H550" stroke="#8a8a8a" stroke-width="1"/><path d="M543 342.5 H550" stroke="#8a8a8a" stroke-width="1"/><path d="M546 331.5 H550" stroke="#8a8a8a" stroke-width="1"/><path d="M546 319.5 H550" stroke="#8a8a8a" stroke-width="1"/><path d="M546 308.5 H550" stroke="#8a8a8a" stroke-width="1"/><path d="M546 296.5 H550" stroke="#8a8a8a" stroke-width="1"/><path d="M543 285.5 H550" stroke="#8a8a8a" stroke-width="1"/><path d="M546 274.5 H550" stroke="#8a8a8a" stroke-width="1"/><path d="M546 262.5 H550" stroke="#8a8a8a" stroke-width="1"/><path d="M546 251.5 H550" stroke="#8a8a8a" stroke-width="1"/><path d="M546 239.5 H550" stroke="#8a8a8a" stroke-width="1"/><path d="M543 228.5 H550" stroke="#8a8a8a" stroke-width="1"/><path d="M546 217.5 H550" stroke="#8a8a8a" stroke-width="1"/><path d="M546 205.5 H550" stroke="#8a8a8a" stroke-width="1"/><path d="M546 194.5 H550" stroke="#8a8a8a" stroke-width="1"/><path d="M546 182.5 H550" stroke="#8a8a8a" stroke-width="1"/><path d="M543 171.5 H550" stroke="#8a8a8a" stroke-width="1"/><path d="M546 160.5 H550" stroke="#8a8a8a" stroke-width="1"/><path d="M546 148.5 H550" stroke="#8a8a8a" stroke-width="1"/><path d="M546 137.5 H550" stroke="#8a8a8a" stroke-width="1"/></svg>
<div class="t" style="left:507px;top:164.0px;width:60px;height:14px;line-height:14px;text-align:center;color:#b4b4b4;font-size:11px;letter-spacing:-0.1px;transform:rotate(-90deg);">450</div>
<div class="t" style="left:507px;top:221.0px;width:60px;height:14px;line-height:14px;text-align:center;color:#b4b4b4;font-size:11px;letter-spacing:-0.1px;transform:rotate(-90deg);">300</div>
<div class="t" style="left:507px;top:278.0px;width:60px;height:14px;line-height:14px;text-align:center;color:#b4b4b4;font-size:11px;letter-spacing:-0.1px;transform:rotate(-90deg);">150</div>
<div class="t" style="left:507px;top:335.0px;width:60px;height:14px;line-height:14px;text-align:center;color:#b4b4b4;font-size:11px;letter-spacing:-0.1px;transform:rotate(-90deg);">0</div>
<div class="t" style="left:507px;top:392.0px;width:60px;height:14px;line-height:14px;text-align:center;color:#b4b4b4;font-size:11px;letter-spacing:-0.1px;transform:rotate(-90deg);">-150</div>
<div class="t" style="left:507px;top:449.0px;width:60px;height:14px;line-height:14px;text-align:center;color:#b4b4b4;font-size:11px;letter-spacing:-0.1px;transform:rotate(-90deg);">-300</div>
<div class="t" style="left:507px;top:506.0px;width:60px;height:14px;line-height:14px;text-align:center;color:#b4b4b4;font-size:11px;letter-spacing:-0.1px;transform:rotate(-90deg);">-450</div>
<svg style="left:0px;top:0px;" width="1920" height="600" viewBox="0 0 1920 600"><path d="M612.5 127 V558" stroke="#4a4a4a" stroke-width="1"/><path d="M662.5 127 V558" stroke="#4a4a4a" stroke-width="1"/><path d="M1473.5 127 V558" stroke="#4a4a4a" stroke-width="1"/><path d="M1523.5 127 V558" stroke="#4a4a4a" stroke-width="1"/><path d="M612 206.5 H1524" stroke="#4a4a4a" stroke-width="1"/><path d="M612 476.5 H1524" stroke="#4a4a4a" stroke-width="1"/><path d="M933 127 V558" stroke="#2c2c2c" stroke-width="2"/><path d="M1203 127 V558" stroke="#2c2c2c" stroke-width="2"/><path d="M703 206.7 H1432.5" stroke="#2c2c2c" stroke-width="1.6"/><path d="M703 477.3 H1432.5" stroke="#2c2c2c" stroke-width="1.6"/><rect x="934" y="207.5" width="268" height="269" fill="#707070"/><rect x="935.65" y="209.35" width="264.7" height="265.3" fill="#666" stroke="#222" stroke-width="0.8"/><rect x="936" y="209.7" width="264" height="264.6" rx="26.6" fill="#00fcc8" stroke="#15302a" stroke-width="0.7"/></svg>
<div class="t" style="left:569.5px;top:459.5px;height:16px;line-height:16px;color:#f0f0f0;font-size:12.5px;-webkit-text-stroke:0.25px #f0f0f0;letter-spacing:-0.655px;">Hold S</div>
<div class="t" style="left:605.5px;top:459.5px;height:16px;line-height:16px;color:rgba(150,150,150,0.6);font-size:12.5px;letter-spacing:-0.295px;">Direct Layer Selection</div>
<div class="t" style="left:569.5px;top:473.5px;height:16px;line-height:16px;color:#f0f0f0;font-size:12.5px;-webkit-text-stroke:0.25px #f0f0f0;letter-spacing:-0.971px;">Space</div>
<div class="t" style="left:603.2px;top:473.5px;height:16px;line-height:16px;color:rgba(150,150,150,0.6);font-size:12.5px;letter-spacing:-0.408px;">Play/ Stop</div>
<div class="t" style="left:569.5px;top:487.5px;height:16px;line-height:16px;color:#f0f0f0;font-size:12.5px;-webkit-text-stroke:0.25px #f0f0f0;letter-spacing:-0.593px;">Space + click + drag</div>
<div class="t" style="left:674px;top:487.5px;height:16px;line-height:16px;color:rgba(150,150,150,0.6);font-size:12.5px;letter-spacing:-0.917px;">Pan</div>
<div class="t" style="left:569.5px;top:501.5px;height:16px;line-height:16px;color:#f0f0f0;font-size:12.5px;-webkit-text-stroke:0.25px #f0f0f0;letter-spacing:-0.356px;">Alt + click + drag</div>
<div class="t" style="left:658.6px;top:501.5px;height:16px;line-height:16px;color:rgba(150,150,150,0.6);font-size:12.5px;letter-spacing:-0.225px;">Move Pivot Point</div>
<div class="t" style="left:569.5px;top:515.5px;height:16px;line-height:16px;color:#f0f0f0;font-size:12.5px;-webkit-text-stroke:0.25px #f0f0f0;letter-spacing:-0.203px;">Shift</div>
<div class="t" style="left:596.7px;top:515.5px;height:16px;line-height:16px;color:rgba(150,150,150,0.6);font-size:12.5px;letter-spacing:-0.622px;">Enable Snapping</div>
<div class="t" style="left:998px;top:535.5px;height:16px;line-height:16px;color:#111;font-size:12.5px;letter-spacing:-0.25px;letter-spacing:-0.111px;">Viewport Quality: High</div>
<div style="left:535px;top:561px;width:78px;height:16px;background:#2a2a2a;border-radius:3px;"></div>
<div class="t" style="left:539px;top:561.5px;height:16px;line-height:16px;color:#e0e0e0;font-size:12.5px;letter-spacing:-0.35px;letter-spacing:-0.777px;">38%</div>
<svg style="left:598px;top:565px;" width="12" height="9" viewBox="0 0 12 9"><path d="M1.5 2 L6 6.5 L10.5 2" fill="none" stroke="#c8c8c8" stroke-width="1.2"/></svg>
<div style="left:866px;top:560px;width:100px;height:18.5px;background:#2a2a2a;border-radius:4px;"></div>
<svg style="left:866px;top:560px;" width="20" height="19" viewBox="0 0 20 19"><path d="M5 4.5 V14.5" stroke="#e0e0e0" stroke-width="1.6"/><path d="M15 4.5 V14.5 L7 9.5 Z" fill="#e0e0e0"/></svg>
<svg style="left:886px;top:560px;" width="20" height="19" viewBox="0 0 20 19"><path d="M11.5 4.5 V14.5 L4 9.5 Z" fill="#e0e0e0"/><path d="M14.5 4.5 V14.5" stroke="#e0e0e0" stroke-width="1.6"/></svg>
<svg style="left:906px;top:560px;" width="20" height="19" viewBox="0 0 20 19"><path d="M6 4 V15 L15 9.5 Z" fill="#e0e0e0"/></svg>
<svg style="left:926px;top:560px;" width="20" height="19" viewBox="0 0 20 19"><path d="M8.5 4.5 V14.5 L16 9.5 Z" fill="#e0e0e0"/><path d="M5.5 4.5 V14.5" stroke="#e0e0e0" stroke-width="1.6"/></svg>
<svg style="left:946px;top:560px;" width="20" height="19" viewBox="0 0 20 19"><path d="M5 4.5 V14.5 L13 9.5 Z" fill="#e0e0e0"/><path d="M15 4.5 V14.5" stroke="#e0e0e0" stroke-width="1.6"/></svg>
<div style="left:886px;top:561px;width:1px;height:17px;background:#3c3c3c;"></div>
<div style="left:906px;top:561px;width:1px;height:17px;background:#3c3c3c;"></div>
<div style="left:926px;top:561px;width:1px;height:17px;background:#3c3c3c;"></div>
<div style="left:946px;top:561px;width:1px;height:17px;background:#3c3c3c;"></div>
<div style="left:971px;top:560px;width:20px;height:18.5px;background:#2a2a2a;border-radius:4px;"></div>
<svg style="left:971px;top:560px;" width="20" height="19" viewBox="0 0 20 19"><path d="M11 6.3 H4.8 Q3.8 6.3 3.8 7.3 V11.6 Q3.8 12.6 4.8 12.6 H15.4 Q16.4 12.6 16.4 11.6 V7.8" fill="none" stroke="#e0e0e0" stroke-width="1.3"/><path d="M11 3.2 L16 6.1 L11 9 Z" fill="#e0e0e0"/></svg>
<div style="left:1232px;top:561px;width:37px;height:17px;background:#2a2a2a;border-radius:3px;"></div>
<svg style="left:1233px;top:563px;" width="16" height="13" viewBox="0 0 16 13"><path d="M1 6.5 L4 2.5 H14 V10.5 H4 Z" fill="#d8d8d8"/><circle cx="5" cy="6.5" r="1.2" fill="#2a2a2a"/></svg>
<div class="t" style="left:1257px;top:561.5px;height:16px;line-height:16px;color:#9a9a9a;font-size:12.5px;">0</div>
<div style="left:1272px;top:560px;width:31px;height:18.5px;background:#2a2a2a;border-radius:4px;"></div>
<svg style="left:1272px;top:560px;" width="20" height="19" viewBox="0 0 20 19"><path d="M3 7.5 H6 L10 4 V15 L6 11.5 H3 Z" fill="#2fd06c"/><path d="M12 6.5 Q14 9.5 12 12.5 M14 4.5 Q17.5 9.5 14 14.5" fill="none" stroke="#2fd06c" stroke-width="1.3"/></svg>
<svg style="left:1292px;top:564px;" width="9" height="11" viewBox="0 0 9 11"><path d="M1.5 1.5 L7 5.5 L1.5 9.5 Z" fill="none" stroke="#a0a0a0" stroke-width="1"/></svg>
<div style="left:1307px;top:560px;width:31px;height:18.5px;background:#2a2a2a;border-radius:4px;"></div>
<div style="left:1307px;top:560px;width:20px;height:18.5px;background:#3b3b3b;border-radius:4px 0 0 4px;border:1px solid #2a2a2a;"></div>
<svg style="left:1307px;top:560px;" width="20" height="19" viewBox="0 0 20 19"><path d="M5.5 14.5 L10 8.5 A3.6 3.6 0 0 1 16 12 L13.5 15.5" fill="none" stroke="#d8d8d8" stroke-width="2.6"/><path d="M4.3 13.6 L6.8 15.4 M12.3 14.6 L14.8 16.4" stroke="#2a2a2a" stroke-width="0.9"/></svg>
<svg style="left:1327px;top:564px;" width="9" height="11" viewBox="0 0 9 11"><path d="M1.5 1.5 L7 5.5 L1.5 9.5 Z" fill="none" stroke="#a0a0a0" stroke-width="1"/></svg>
<div style="left:1342px;top:560px;width:31px;height:18.5px;background:#2a2a2a;border-radius:4px;"></div>
<div style="left:1342px;top:560px;width:20px;height:18.5px;background:#3b3b3b;border-radius:4px 0 0 4px;border:1px solid #2a2a2a;"></div>
<svg style="left:1342px;top:560px;" width="20" height="19" viewBox="0 0 20 19"><path d="M7 3.5 V15.5 M13 3.5 V15.5 M3.5 7 H16.5 M3.5 12 H16.5" stroke="#d8d8d8" stroke-width="1.2"/></svg>
<svg style="left:1362px;top:564px;" width="9" height="11" viewBox="0 0 9 11"><path d="M1.5 1.5 L7 5.5 L1.5 9.5 Z" fill="none" stroke="#a0a0a0" stroke-width="1"/></svg>
<div style="left:1377px;top:560px;width:20px;height:18.5px;background:#2a2a2a;border-radius:4px;"></div>
<svg style="left:1377px;top:560px;" width="20" height="19" viewBox="0 0 20 19"><rect x="3" y="4" width="4" height="11" fill="#2fd06c"/><rect x="8.5" y="4" width="8.5" height="4.5" fill="#2fd06c"/><rect x="8.5" y="10.5" width="8.5" height="4.5" fill="#2fd06c"/></svg>
<div style="left:1400px;top:560px;width:20px;height:18.5px;background:#2a2a2a;border-radius:4px;"></div>
<svg style="left:1400px;top:560px;" width="20" height="19" viewBox="0 0 20 19"><path d="M3 5 L7 9.5 L3 14 M7.5 5 L11.5 9.5 L7.5 14 M12 5 L16 9.5 L12 14" fill="none" stroke="#d8d8d8" stroke-width="1.5"/></svg>
<div style="left:1423px;top:560px;width:32px;height:18.5px;background:#2a2a2a;border-radius:4px;"></div>
<div style="left:1423px;top:560px;width:21px;height:18.5px;background:#3b3b3b;border-radius:4px 0 0 4px;border:1px solid #2a2a2a;"></div>
<svg style="left:1423px;top:560px;" width="20" height="19" viewBox="0 0 20 19"><rect x="3.5" y="4" width="14" height="10" fill="none" stroke="#d8d8d8" stroke-width="1.3"/><rect x="3" y="12.5" width="15" height="2.5" fill="#d8d8d8"/></svg>
<svg style="left:1444px;top:564px;" width="9" height="11" viewBox="0 0 9 11"><path d="M1.5 1.5 L7 5.5 L1.5 9.5 Z" fill="none" stroke="#a0a0a0" stroke-width="1"/></svg>
<div style="left:1458px;top:560px;width:31px;height:18.5px;background:#2a2a2a;border-radius:4px;"></div>
<div style="left:1458px;top:560px;width:20px;height:18.5px;background:#3b3b3b;border-radius:4px 0 0 4px;border:1px solid #2a2a2a;"></div>
<svg style="left:1458px;top:560px;" width="20" height="19" viewBox="0 0 20 19"><path d="M3.5 3.5 H12.5 V9.5 H3.5 Z M6 9.5 V12.5 H15 V6.5 H12.5 M9 12.5 V15.5 H17.5 V9.5 H15" fill="none" stroke="#a8a8a8" stroke-width="1.1"/></svg>
<svg style="left:1478px;top:564px;" width="9" height="11" viewBox="0 0 9 11"><path d="M1.5 1.5 L7 5.5 L1.5 9.5 Z" fill="none" stroke="#a0a0a0" stroke-width="1"/></svg>
<div style="left:1493px;top:560px;width:31px;height:18.5px;background:#2a2a2a;border-radius:4px;"></div>
<div style="left:1493px;top:560px;width:20px;height:18.5px;background:#3b3b3b;border-radius:4px 0 0 4px;border:1px solid #2a2a2a;"></div>
<svg style="left:1493px;top:560px;" width="20" height="19" viewBox="0 0 20 19"><rect x="3.5" y="3" width="9" height="9" fill="#a8a8a8"/><rect x="8.5" y="8" width="8" height="8" fill="#2a2a2a" stroke="#d8d8d8" stroke-width="1.1"/></svg>
<svg style="left:1513px;top:564px;" width="9" height="11" viewBox="0 0 9 11"><path d="M1.5 1.5 L7 5.5 L1.5 9.5 Z" fill="none" stroke="#a0a0a0" stroke-width="1"/></svg>
<div style="left:1528px;top:560px;width:31px;height:18.5px;background:#2a2a2a;border-radius:4px;"></div>
<svg style="left:1528px;top:560px;" width="20" height="19" viewBox="0 0 20 19"><rect x="4" y="3.5" width="3" height="3" fill="#2fd06c"/><rect x="4" y="9.5" width="3" height="3" fill="#2fd06c"/><rect x="7" y="6.5" width="3" height="3" fill="#2fd06c"/><rect x="7" y="12.5" width="3" height="3" fill="#2fd06c"/><rect x="10" y="3.5" width="3" height="3" fill="#2fd06c"/><rect x="10" y="9.5" width="3" height="3" fill="#2fd06c"/><rect x="13" y="6.5" width="3" height="3" fill="#2fd06c"/><rect x="13" y="12.5" width="3" height="3" fill="#2fd06c"/></svg>
<svg style="left:1548px;top:564px;" width="9" height="11" viewBox="0 0 9 11"><path d="M1.5 1.5 L7 5.5 L1.5 9.5 Z" fill="none" stroke="#a0a0a0" stroke-width="1"/></svg>
<div style="left:1563px;top:560px;width:20px;height:18.5px;background:#2a2a2a;border-radius:4px;"></div>
<svg style="left:1563px;top:560px;" width="20" height="19" viewBox="0 0 20 19"><path d="M16.47 8.86 L16.47 10.14 L14.60 10.90 L14.24 11.77 L15.02 13.62 L14.12 14.52 L12.27 13.74 L11.40 14.10 L10.64 15.97 L9.36 15.97 L8.60 14.10 L7.73 13.74 L5.88 14.52 L4.98 13.62 L5.76 11.77 L5.40 10.90 L3.53 10.14 L3.53 8.86 L5.40 8.10 L5.76 7.23 L4.98 5.38 L5.88 4.48 L7.73 5.26 L8.60 4.90 L9.36 3.03 L10.64 3.03 L11.40 4.90 L12.27 5.26 L14.12 4.48 L15.02 5.38 L14.24 7.23 L14.60 8.10 Z" fill="#d8d8d8"/><circle cx="10" cy="9.5" r="2.34" fill="#2a2a2a"/></svg>
<div style="left:1593px;top:85px;width:40px;height:23px;background:#464646;border-radius:4px 4px 0 0;"></div>
<div class="t" style="left:1598px;top:88.5px;height:16px;line-height:16px;color:#e6e6e6;font-size:12.5px;letter-spacing:-0.35px;letter-spacing:-0.175px;">Color</div>
<div style="left:1634px;top:85px;width:69px;height:22px;background:#2b2b2b;border-radius:4px 4px 0 0;"></div>
<div class="t" style="left:1639px;top:88.5px;height:16px;line-height:16px;color:#e6e6e6;font-size:12.5px;letter-spacing:-0.35px;letter-spacing:-0.523px;">Add Layers</div>
<div style="left:1593px;top:107px;width:321px;height:377px;background:#464646;"></div>
<div style="left:1900px;top:107px;width:13px;height:377px;background:#3e3e3e;"></div>
<div style="left:1902px;top:108px;width:10px;height:303px;background:#5a5a5a;border-radius:5px;"></div>
<div style="left:1646px;top:120px;width:200px;height:200px;border-radius:50%;background:conic-gradient(from 90deg,#ff0000,#f800ec,#0000ff,#00ecf4,#00ff00,#ecf400,#ff0000);"></div>
<div style="left:1671px;top:145px;width:150px;height:150px;background:#464646;border-radius:50%;"></div>
<div style="left:1702px;top:176px;width:90px;height:90px;background:linear-gradient(to right,#000,rgba(0,0,0,0)),linear-gradient(to bottom,#fff,#f00);"></div>
<svg style="left:1738px;top:169px;" width="14" height="14" viewBox="0 0 14 14"><circle cx="7" cy="7" r="5.5" fill="none" stroke="#e8e8e8" stroke-width="1.1"/></svg>
<svg style="left:1826px;top:213px;" width="14" height="14" viewBox="0 0 14 14"><circle cx="7" cy="7" r="5.5" fill="none" stroke="#fff" stroke-width="1.1"/></svg>
<div style="left:1600px;top:333px;width:22px;height:22px;background:#7a7a7a;border-radius:3px;"></div>
<div class="t" style="left:1625px;top:336.5px;height:16px;line-height:16px;color:#e0e0e0;font-size:12.5px;letter-spacing:-0.35px;letter-spacing:-0.423px;">Gray</div>
<div style="left:1871px;top:334px;width:22px;height:21px;background:#2a2a2a;border-radius:4px;"></div>
<svg style="left:1874px;top:336px;" width="17" height="17" viewBox="0 0 17 17"><path d="M3 14.5 L3.5 12.5 L9 7 L10.5 8.5 L5 14 Z" fill="none" stroke="#b0b0b0" stroke-width="1.1"/><path d="M8.5 5.5 L12 9 M10 7 L12 4 Q13.5 3 14 4.5 L12 7" stroke="#c8c8c8" stroke-width="1.8" fill="#c8c8c8"/></svg>
<div style="left:1600px;top:361px;width:49px;height:17px;background:#464646;border-radius:3px;border:1px solid #5a5a5a;"></div>
<div class="t" style="left:1603px;top:361.5px;height:16px;line-height:16px;color:#e0e0e0;font-size:12.5px;letter-spacing:-0.35px;letter-spacing:-0.411px;">Hex</div>
<svg style="left:1634px;top:365px;" width="12" height="9" viewBox="0 0 12 9"><path d="M1.5 2 L6 6.5 L10.5 2" fill="none" stroke="#c0c0c0" stroke-width="1.2"/></svg>
<div style="left:1653px;top:359px;width:240px;height:21px;background:#2a2a2a;border-radius:3px;"></div>
<div class="t" style="left:1659px;top:361.5px;height:16px;line-height:16px;color:#5c5c5c;font-size:11px;">#</div>
<div class="t" style="left:1670px;top:361.5px;height:16px;line-height:16px;color:#e0e0e0;font-size:12.5px;letter-spacing:-0.35px;letter-spacing:-0.386px;">7a7a7a</div>
<div style="left:1600px;top:390px;width:234px;height:4px;background:#e0e0e0;border-radius:2px;"></div>
<svg style="left:1828px;top:386px;" width="12" height="12" viewBox="0 0 12 12"><circle cx="6" cy="6" r="5" fill="#57b89c"/><circle cx="6" cy="6" r="2.6" fill="#7fd6ba"/></svg>
<div style="left:1849px;top:385px;width:44px;height:16px;background:#2a2a2a;border-radius:3px;"></div>
<div class="t" style="left:1853px;top:385.5px;height:16px;line-height:16px;color:#5c5c5c;font-size:12.5px;">A</div>
<div class="t" style="left:1866px;top:385.5px;height:16px;line-height:16px;color:#e0e0e0;font-size:12.5px;letter-spacing:-0.35px;letter-spacing:-0.153px;">255</div>
<div style="left:1598px;top:408px;width:298px;height:20px;background:#2b2b2b;border-radius:3px;"></div>
<div style="left:1598px;top:408px;width:149px;height:20px;background:#464646;border-radius:4px 4px 0 0;border-left:1px solid #2b2b2b;border-top:1px solid #2b2b2b;"></div>
<div class="t" style="left:1647px;top:410px;height:16px;line-height:16px;color:#e6e6e6;font-size:12.5px;letter-spacing:-0.35px;letter-spacing:-0.538px;">Swatches</div>
<div class="t" style="left:1795px;top:410px;height:16px;line-height:16px;color:#b8b8b8;font-size:12.5px;letter-spacing:-0.35px;letter-spacing:-0.187px;">Generator</div>
<div style="left:1598px;top:432px;width:257px;height:17px;background:#555;border-radius:4px;"></div>
<div style="left:1599px;top:433px;width:62px;height:15px;background:#2a2a2a;border-radius:3px;"></div>
<svg style="left:1603px;top:435px;" width="12" height="11" viewBox="0 0 12 11"><path d="M1.5 1 V10 M4.5 1 V10 M7 1.5 L10 10" stroke="#2fd06c" stroke-width="1.5"/></svg>
<div class="t" style="left:1620px;top:433px;height:16px;line-height:16px;color:#e6e6e6;font-size:12.5px;letter-spacing:-0.35px;letter-spacing:-0.074px;">Library</div>
<svg style="left:1669px;top:435px;" width="12" height="11" viewBox="0 0 12 11"><path d="M1 2 H5 L6 3.5 H11 V10 H1 Z" fill="none" stroke="#d0d0d0" stroke-width="1.1"/><path d="M3 6 H9 M3 8 H9" stroke="#d0d0d0" stroke-width="0.9"/></svg>
<div class="t" style="left:1685px;top:433px;height:16px;line-height:16px;color:#e6e6e6;font-size:12.5px;letter-spacing:-0.35px;letter-spacing:-0.129px;">Project</div>
<svg style="left:1737px;top:435px;" width="10" height="11" viewBox="0 0 10 11"><path d="M1.5 1 H6 L8.5 3.5 V10 H1.5 Z" fill="none" stroke="#d0d0d0" stroke-width="1.1"/></svg>
<div class="t" style="left:1751px;top:433px;height:16px;line-height:16px;color:#e6e6e6;font-size:12.5px;letter-spacing:-0.35px;letter-spacing:-0.811px;">Scene</div>
<svg style="left:1800px;top:435px;" width="12" height="11" viewBox="0 0 12 11"><path d="M2 2.5 Q2 1.5 3 1.5 H9 Q10.5 1.5 10.5 3 V6 L7 9.5 H3 Q2 9.5 2 8.5 Z" fill="none" stroke="#d0d0d0" stroke-width="1.1"/></svg>
<div class="t" style="left:1816px;top:433px;height:16px;line-height:16px;color:#e6e6e6;font-size:12.5px;letter-spacing:-0.35px;letter-spacing:-0.541px;">Labels</div>
<div style="left:1858px;top:432px;width:37px;height:17px;background:#555;border-radius:4px;"></div>
<div style="left:1858px;top:432px;width:18px;height:17px;background:#2a2a2a;border-radius:4px;"></div>
<svg style="left:1861px;top:435px;" width="12" height="11" viewBox="0 0 12 11"><g fill="#2fd06c"><rect x="1" y="0.5" width="4" height="4" rx="0.8"/><rect x="7" y="0.5" width="4" height="4" rx="0.8"/><rect x="1" y="6.5" width="4" height="4" rx="0.8"/><rect x="7" y="6.5" width="4" height="4" rx="0.8"/></g></svg>
<svg style="left:1880px;top:435px;" width="12" height="11" viewBox="0 0 12 11"><path d="M1 2 H11 M1 5.5 H11 M1 9 H11" stroke="#e0e0e0" stroke-width="1.2"/></svg>
<div style="left:1598px;top:453px;width:275px;height:16px;background:#3e3e3e;border-radius:3px;border:1px solid #555;"></div>
<div class="t" style="left:1601px;top:453px;height:16px;line-height:16px;color:#e6e6e6;font-size:12.5px;letter-spacing:-0.35px;letter-spacing:-0.312px;">new</div>
<svg style="left:1859px;top:457px;" width="12" height="9" viewBox="0 0 12 9"><path d="M1.5 1.5 L6 6 L10.5 1.5" fill="none" stroke="#c0c0c0" stroke-width="1.1"/></svg>
<div class="t" style="left:1880px;top:452.5px;height:16px;line-height:16px;color:#d0d0d0;font-size:14px;letter-spacing:0.6px;font-weight:bold;">···</div>
<div style="left:1598px;top:471px;width:298px;height:13px;background:#2b2b2b;"></div>
<div style="left:1600px;top:472px;width:18px;height:12px;background:#9b51f0;border-radius:3px 3px 0 0;"></div>
<div style="left:1622px;top:472px;width:18px;height:12px;background:#4da0f5;border-radius:3px 3px 0 0;"></div>
<div style="left:1644px;top:472px;width:18px;height:12px;background:#f57a4d;border-radius:3px 3px 0 0;"></div>
<div style="left:1666px;top:472px;width:18px;height:12px;background:#4df5b0;border-radius:3px 3px 0 0;"></div>
<div style="left:1688px;top:472px;width:18px;height:12px;background:#f04d5a;border-radius:3px 3px 0 0;"></div>
<div style="left:1710px;top:472px;width:18px;height:12px;background:#f54dc0;border-radius:3px 3px 0 0;"></div>
<div style="left:1732px;top:472px;width:18px;height:12px;background:#f5d04d;border-radius:3px 3px 0 0;"></div>
<div style="left:1754px;top:472px;width:18px;height:12px;background:#3f68d8;border-radius:3px 3px 0 0;"></div>
<div style="left:1776px;top:472px;width:18px;height:12px;background:#4de0d0;border-radius:3px 3px 0 0;"></div>
<div style="left:1798px;top:472px;width:18px;height:12px;background:#d880d8;border-radius:3px 3px 0 0;"></div>
<div style="left:1820px;top:472px;width:18px;height:12px;background:#b0e890;border-radius:3px 3px 0 0;"></div>
<div style="left:1842px;top:472px;width:18px;height:12px;background:#6a50f0;border-radius:3px 3px 0 0;"></div>
<div style="left:1593px;top:490px;width:39px;height:23px;background:#464646;border-radius:4px 4px 0 0;"></div>
<div class="t" style="left:1598px;top:493.5px;height:16px;line-height:16px;color:#e6e6e6;font-size:12.5px;letter-spacing:-0.35px;letter-spacing:-0.159px;">Align</div>
<div style="left:1593px;top:512px;width:321px;height:68px;background:#464646;"></div>
<div class="t" style="left:1601px;top:523.5px;height:16px;line-height:16px;color:#e6e6e6;font-size:12.5px;letter-spacing:-0.35px;letter-spacing:-0.166px;">Alignment</div>
<div class="t" style="left:1601px;top:551.5px;height:16px;line-height:16px;color:#e6e6e6;font-size:12.5px;letter-spacing:-0.35px;letter-spacing:0.089px;">Distribution</div>
<div style="left:1790px;top:522px;width:54px;height:18px;background:#222;border-radius:4px;"></div>
<svg style="left:1790px;top:522px;" width="18" height="18" viewBox="0 0 18 18"><path d="M4 3 V15" stroke="#e0e0e0" stroke-width="1.3"/><path d="M6 6.5 H14 M6 11.5 H11" stroke="#e0e0e0" stroke-width="1.8"/></svg>
<svg style="left:1808px;top:522px;" width="18" height="18" viewBox="0 0 18 18"><path d="M9 3 V15" stroke="#e0e0e0" stroke-width="1.3"/><path d="M4 6.5 H14 M5.5 11.5 H12.5" stroke="#e0e0e0" stroke-width="1.8"/></svg>
<svg style="left:1826px;top:522px;" width="18" height="18" viewBox="0 0 18 18"><path d="M14 3 V15" stroke="#e0e0e0" stroke-width="1.3"/><path d="M4 6.5 H12 M7 11.5 H12" stroke="#e0e0e0" stroke-width="1.8"/></svg>
<div style="left:1808px;top:523px;width:1px;height:16px;background:#3c3c3c;"></div>
<div style="left:1826px;top:523px;width:1px;height:16px;background:#3c3c3c;"></div>
<div style="left:1852px;top:522px;width:54px;height:18px;background:#222;border-radius:4px;"></div>
<svg style="left:1852px;top:522px;" width="18" height="18" viewBox="0 0 18 18"><path d="M3 4 H15" stroke="#e0e0e0" stroke-width="1.3"/><path d="M6.5 6 V14 M11.5 6 V11" stroke="#e0e0e0" stroke-width="1.8"/></svg>
<svg style="left:1870px;top:522px;" width="18" height="18" viewBox="0 0 18 18"><path d="M3 9 H15" stroke="#e0e0e0" stroke-width="1.3"/><path d="M6.5 4 V14 M11.5 5.5 V12.5" stroke="#e0e0e0" stroke-width="1.8"/></svg>
<svg style="left:1888px;top:522px;" width="18" height="18" viewBox="0 0 18 18"><path d="M3 14 H15" stroke="#e0e0e0" stroke-width="1.3"/><path d="M6.5 4 V12 M11.5 7 V12" stroke="#e0e0e0" stroke-width="1.8"/></svg>
<div style="left:1870px;top:523px;width:1px;height:16px;background:#3c3c3c;"></div>
<div style="left:1888px;top:523px;width:1px;height:16px;background:#3c3c3c;"></div>
<div style="left:1790px;top:550px;width:54px;height:18px;background:#222;border-radius:4px;"></div>
<svg style="left:1790px;top:550px;" width="18" height="18" viewBox="0 0 18 18"><path d="M5 3 V15 M12 3 V15" stroke="#e0e0e0" stroke-width="1.3"/><path d="M8.5 5 V13" stroke="#e0e0e0" stroke-width="2"/></svg>
<svg style="left:1808px;top:550px;" width="18" height="18" viewBox="0 0 18 18"><path d="M3 4 H15 M3 14 H15" stroke="#e0e0e0" stroke-width="1.3"/><path d="M5 9 H13" stroke="#e0e0e0" stroke-width="2"/></svg>
<svg style="left:1826px;top:550px;" width="18" height="18" viewBox="0 0 18 18"><g fill="#e0e0e0"><rect x="3" y="10" width="3" height="4"/><rect x="7.5" y="7" width="3" height="4"/><rect x="12" y="4" width="3" height="4"/></g><path d="M3 3 H5 M13 15 H15 M3 3 V5 M15 13 V15" stroke="#e0e0e0" stroke-width="1"/></svg>
<div style="left:1808px;top:551px;width:1px;height:16px;background:#3c3c3c;"></div>
<div style="left:1826px;top:551px;width:1px;height:16px;background:#3c3c3c;"></div>
<div style="left:494px;top:586px;width:89px;height:23px;background:#464646;border-radius:4px 4px 0 0;"></div>
<div class="t" style="left:499px;top:589.5px;height:16px;line-height:16px;color:#e6e6e6;font-size:12.5px;letter-spacing:-0.35px;letter-spacing:-0.448px;">Scene Window</div>
<div style="left:584px;top:586px;width:100px;height:22px;background:#2b2b2b;border-radius:4px 4px 0 0;"></div>
<div class="t" style="left:589px;top:589.5px;height:16px;line-height:16px;color:#e6e6e6;font-size:12.5px;letter-spacing:-0.35px;letter-spacing:-0.328px;">JavaScript Editor</div>
<div style="left:685px;top:586px;width:112px;height:22px;background:#2b2b2b;border-radius:4px 4px 0 0;"></div>
<div class="t" style="left:690px;top:589.5px;height:16px;line-height:16px;color:#e6e6e6;font-size:12.5px;letter-spacing:-0.35px;letter-spacing:-0.450px;">Dependency Graph</div>
<div style="left:494px;top:608px;width:1420px;height:392px;background:#2b2b2b;"></div>
<div style="left:494px;top:608px;width:699px;height:24px;background:#383838;"></div>
<div style="left:1193px;top:608px;width:721px;height:24px;background:#222;"></div>
<div style="left:499px;top:609.5px;width:1410px;height:21.5px;background:#464646;border-radius:3px 3px 0 0;"></div>
<div class="t" style="left:1165px;top:612px;height:16px;line-height:16px;color:#e6e6e6;font-size:12.5px;letter-spacing:-0.35px;letter-spacing:-0.285px;">Composition 1</div>
<div style="left:494px;top:631px;width:699px;height:42px;background:#464646;"></div>
<div style="left:496px;top:633px;width:489px;height:19px;background:#242424;border-radius:10px;"></div>
<svg style="left:499px;top:635px;" width="15" height="15" viewBox="0 0 15 15"><circle cx="6" cy="6" r="4.5" fill="none" stroke="#d0d0d0" stroke-width="1.2"/><path d="M9.5 9.5 L13 13" stroke="#d0d0d0" stroke-width="1.6"/></svg>
<div class="t" style="left:520px;top:634.5px;height:16px;line-height:16px;color:#8a8a8a;font-size:12.5px;letter-spacing:-0.35px;letter-spacing:-0.512px;">Enter a layer name</div>
<div style="left:987px;top:633px;width:20px;height:19px;background:#222;border-radius:4px;"></div>
<svg style="left:987px;top:633px;" width="20" height="19" viewBox="0 0 20 19"><path d="M10 4.5 V14.5 M5 9.5 H15" stroke="#e6e6e6" stroke-width="1.8"/><path d="M16 18 H19 V15 Z" fill="#2fd06c"/></svg>
<div style="left:1031px;top:633px;width:20px;height:19px;background:#222;border-radius:4px;"></div>
<svg style="left:1031px;top:633px;" width="20" height="19" viewBox="0 0 20 19"><circle cx="12" cy="7" r="4" fill="#d8d8d8"/><circle cx="9.5" cy="10" r="4" fill="none" stroke="#8a8a8a" stroke-width="1"/><circle cx="7.5" cy="12" r="3.5" fill="none" stroke="#5a5a5a" stroke-width="1"/></svg>
<div style="left:1053px;top:633px;width:20px;height:19px;background:#222;border-radius:4px;"></div>
<svg style="left:1053px;top:633px;" width="20" height="19" viewBox="0 0 20 19"><g fill="#d8d8d8"><circle cx="5" cy="4.5" r="1"/><circle cx="11" cy="4" r="1"/><circle cx="4.5" cy="11" r="1"/><circle cx="16" cy="7" r="0.9"/><path d="M11 7 L12 10.5 L15.5 11.5 L12 12.5 L11 16 L10 12.5 L6.5 11.5 L10 10.5 Z"/></g><path d="M16 18 H19 V15 Z" fill="#2fd06c"/></svg>
<div style="left:1075px;top:633px;width:20px;height:19px;background:#222;border-radius:4px;"></div>
<svg style="left:1075px;top:633px;" width="20" height="19" viewBox="0 0 20 19"><path d="M3 5 H17 M3 9.5 H17 M3 14 H17" stroke="#d8d8d8" stroke-width="1"/><circle cx="8" cy="5" r="1.8" fill="#222" stroke="#d8d8d8"/><circle cx="12" cy="9.5" r="1.8" fill="#222" stroke="#d8d8d8"/><circle cx="7" cy="14" r="1.8" fill="#222" stroke="#d8d8d8"/><path d="M16 18 H19 V15 Z" fill="#2fd06c"/></svg>
<div style="left:1097px;top:633px;width:94px;height:19px;background:#2a2a2a;border-radius:3px;"></div>
<div class="t" style="left:1102px;top:634.5px;height:16px;line-height:16px;color:#555;font-size:12.5px;">F</div>
<div class="t" style="left:1114px;top:634.5px;height:16px;line-height:16px;color:#e0e0e0;font-size:12.5px;">0</div>
<svg style="left:498px;top:656px;" width="13" height="14" viewBox="0 0 13 14"><rect x="2" y="6" width="9" height="7" rx="1" fill="#d0d0d0"/><path d="M4 6 V4 Q4 1.5 6.5 1.5 Q9 1.5 9 4 V6" fill="none" stroke="#d0d0d0" stroke-width="1.3"/><circle cx="6.5" cy="9.5" r="1" fill="#464646"/></svg>
<svg style="left:516px;top:657px;" width="16" height="12" viewBox="0 0 16 12"><path d="M1 6 Q8 -1 15 6 Q8 13 1 6 Z" fill="none" stroke="#d0d0d0" stroke-width="1.1"/><circle cx="8" cy="6" r="2.5" fill="#d0d0d0"/></svg>
<svg style="left:536px;top:656px;" width="14" height="14" viewBox="0 0 14 14"><path d="M7 1.5 L12.5 4.5 V10 L7 13 L1.5 10 V4.5 Z M1.5 4.5 L7 7.5 L12.5 4.5 M7 7.5 V13" fill="none" stroke="#d0d0d0" stroke-width="1.1"/></svg>
<svg style="left:555px;top:656px;" width="15" height="14" viewBox="0 0 15 14"><path d="M1 5 H4 L7.5 2 V12 L4 9 H1 Z" fill="#d0d0d0"/><path d="M9.5 4.5 Q11.5 7 9.5 9.5 M11.5 2.5 Q15 7 11.5 11.5" fill="none" stroke="#d0d0d0" stroke-width="1.2"/></svg>
<svg style="left:574px;top:655px;" width="14" height="15" viewBox="0 0 14 15"><path d="M1.5 13.5 L2 11 L8 5 L10 7 L4 13 Z" fill="none" stroke="#9a9a9a" stroke-width="1.1"/><path d="M7.5 3.5 L11.5 7.5 M9 5 L11 2 Q12.5 1 13 2.5 L11 5" stroke="#d0d0d0" stroke-width="1.6" fill="#d0d0d0"/></svg>
<svg style="left:593px;top:658px;" width="15" height="10" viewBox="0 0 15 10"><path d="M0.5 5 L3.5 1 H14 V9 H3.5 Z" fill="#d8d8d8"/><circle cx="4.6" cy="5" r="1.2" fill="#464646"/></svg>
<div class="t" style="left:648px;top:655.5px;height:16px;line-height:16px;color:#e6e6e6;font-size:12.5px;letter-spacing:-0.35px;letter-spacing:-0.661px;">Name</div>
<div style="left:494px;top:673px;width:683px;height:242px;background:#383838;"></div>
<div style="left:494px;top:673px;width:683px;height:20px;background:#5a4d48;"></div>
<div style="left:496px;top:674px;width:18px;height:18px;background:#2b2b2b;border-radius:2px;"></div>
<div style="left:515px;top:674px;width:18px;height:18px;background:#2b2b2b;border-radius:2px;"></div>
<svg style="left:515px;top:674px;" width="18" height="18" viewBox="0 0 18 18"><circle cx="9" cy="9" r="5.3" fill="none" stroke="#e0e0e0" stroke-width="1.2"/><path d="M6.3 9 L8.5 11.2 L13.5 5" fill="none" stroke="#e0e0e0" stroke-width="1.3"/></svg>
<div style="left:573px;top:675px;width:16px;height:16px;background:#f5a673;border-radius:2px;"></div>
<svg style="left:593px;top:678px;" width="15" height="10" viewBox="0 0 15 10"><path d="M0.5 5 L3.5 1 H14 V9 H3.5 Z" fill="#d8d8d8"/><circle cx="4.6" cy="5" r="1.2" fill="#5a4d48"/></svg>
<svg style="left:651px;top:678px;" width="10" height="10" viewBox="0 0 10 10"><path d="M1.5 3 H8 M1.5 6.5 H8" stroke="#7ab4f0" stroke-width="1.2"/></svg>
<div class="t" style="left:667px;top:675.5px;height:16px;line-height:16px;color:#f0f0f0;font-size:12.5px;letter-spacing:-0.35px;letter-spacing:-0.453px;">AddGridSizes</div>
<div style="left:1139px;top:675px;width:21px;height:16px;background:#4a403c;border-radius:3px;"></div>
<svg style="left:1139px;top:675px;" width="21" height="16" viewBox="0 0 21 16"><path d="M2.5 8 L5.5 5 H8 V11 H5.5 Z" fill="#9c8a50"/><path d="M18.5 8 L15.5 5 H13 V11 H15.5 Z" fill="#6a625c"/></svg>
<svg style="left:1164px;top:677px;" width="12" height="12" viewBox="0 0 12 12"><circle cx="6" cy="6" r="4.3" fill="none" stroke="#8a8a8a" stroke-width="1.1"/></svg>
<div style="left:496px;top:696px;width:18px;height:18px;background:#2b2b2b;border-radius:2px;"></div>
<div style="left:515px;top:696px;width:18px;height:18px;background:#2b2b2b;border-radius:2px;"></div>
<div style="left:534px;top:696px;width:18px;height:18px;background:#2b2b2b;border-radius:2px;"></div>
<svg style="left:516px;top:699px;" width="16" height="12" viewBox="0 0 16 12"><path d="M1 6 Q8 -1 15 6 Q8 13 1 6 Z" fill="none" stroke="#d0d0d0" stroke-width="1.1"/><circle cx="8" cy="6" r="2.5" fill="#d0d0d0"/></svg>
<div style="left:573px;top:697px;width:16px;height:16px;background:#c8c8c8;border-radius:2px;"></div>
<svg style="left:593px;top:700px;" width="15" height="10" viewBox="0 0 15 10"><path d="M0.5 5 L3.5 1 H14 V9 H3.5 Z" fill="#d8d8d8"/><circle cx="4.6" cy="5" r="1.2" fill="#383838"/></svg>
<div style="left:611px;top:697px;width:14px;height:16px;background:#333;border-radius:2px;"></div>
<svg style="left:613px;top:701px;" width="10" height="8" viewBox="0 0 10 8"><path d="M1.5 1.5 L5 5 L8.5 1.5" fill="none" stroke="#8a8a8a" stroke-width="1.1"/></svg>
<div style="left:626px;top:697px;width:14px;height:16px;background:#353535;border-radius:2px;"></div>
<svg style="left:648px;top:698px;" width="15" height="13" viewBox="0 0 15 13"><path d="M0.5 1 H5.5 L7 3 H14 V12 H0.5 Z" fill="#d0d0d0"/><path d="M0.5 3.8 H14" stroke="#383838" stroke-width="0.8"/></svg>
<div class="t" style="left:667px;top:697.5px;height:16px;line-height:16px;color:#f0f0f0;font-size:12.5px;letter-spacing:-0.35px;letter-spacing:-0.051px;">VerticalGrid</div>
<svg style="left:1164px;top:699px;" width="12" height="12" viewBox="0 0 12 12"><circle cx="6" cy="6" r="4.3" fill="none" stroke="#8a8a8a" stroke-width="1.1"/></svg>
<div style="left:496px;top:718px;width:18px;height:18px;background:#333;border-radius:2px;"></div>
<div style="left:515px;top:718px;width:18px;height:18px;background:#333;border-radius:2px;"></div>
<svg style="left:515px;top:718px;" width="18" height="18" viewBox="0 0 18 18"><circle cx="9" cy="9" r="5.3" fill="none" stroke="#7a7a7a" stroke-width="1.2"/><path d="M6.3 9 L8.5 11.2 L13.5 5" fill="none" stroke="#7a7a7a" stroke-width="1.3"/></svg>
<div style="left:573px;top:719px;width:16px;height:16px;background:#7d9560;border-radius:2px;"></div>
<svg style="left:593px;top:722px;" width="15" height="10" viewBox="0 0 15 10"><path d="M0.5 5 L3.5 1 H14 V9 H3.5 Z" fill="#7a7a7a"/><circle cx="4.6" cy="5" r="1.2" fill="#383838"/></svg>
<svg style="left:670px;top:719px;" width="10" height="16" viewBox="0 0 10 16"><rect x="5" y="0.5" width="3" height="14" fill="#5d8a60"/><rect x="1" y="9" width="3.5" height="5.5" fill="#7a7a7a"/></svg>
<div class="t" style="left:686px;top:719.5px;height:16px;line-height:16px;color:#8a8a8a;font-size:12.5px;letter-spacing:-0.35px;letter-spacing:-0.188px;"><s>VerticalLineDistance</s></div>
<svg style="left:1121px;top:722px;" width="11" height="11" viewBox="0 0 11 11"><circle cx="5.5" cy="5.5" r="4" fill="none" stroke="#8a8a8a" stroke-width="1"/><path d="M2.7 8.3 L8.3 2.7" stroke="#8a8a8a" stroke-width="1"/></svg>
<div style="left:1139px;top:719px;width:21px;height:16px;background:#2f2f2f;border-radius:3px;"></div>
<svg style="left:1139px;top:719px;" width="21" height="16" viewBox="0 0 21 16"><path d="M2.5 8 L5.5 5 H8 V11 H5.5 Z" fill="#9c8a50"/><path d="M18.5 8 L15.5 5 H13 V11 H15.5 Z" fill="#c85ae8"/></svg>
<svg style="left:1164px;top:721px;" width="12" height="12" viewBox="0 0 12 12"><circle cx="6" cy="6" r="4.3" fill="none" stroke="#8a8a8a" stroke-width="1.1"/></svg>
<div style="left:647px;top:738px;width:173px;height:24px;background:#2e2e2e;"></div>
<div style="left:496px;top:740px;width:18px;height:18px;background:#2b2b2b;border-radius:2px;"></div>
<div style="left:515px;top:740px;width:18px;height:18px;background:#2b2b2b;border-radius:2px;"></div>
<div style="left:534px;top:740px;width:18px;height:18px;background:#2b2b2b;border-radius:2px;"></div>
<svg style="left:516px;top:743px;" width="16" height="12" viewBox="0 0 16 12"><path d="M1 6 Q8 -1 15 6 Q8 13 1 6 Z" fill="none" stroke="#d0d0d0" stroke-width="1.1"/><circle cx="8" cy="6" r="2.5" fill="#d0d0d0"/></svg>
<div style="left:573px;top:741px;width:16px;height:16px;background:#fde47a;border-radius:2px;"></div>
<svg style="left:593px;top:744px;" width="15" height="10" viewBox="0 0 15 10"><path d="M0.5 5 L3.5 1 H14 V9 H3.5 Z" fill="#d8d8d8"/><circle cx="4.6" cy="5" r="1.2" fill="#383838"/></svg>
<svg style="left:667px;top:742px;" width="13" height="13" viewBox="0 0 13 13"><circle cx="2" cy="2" r="0.9" fill="#f5e06a"/><circle cx="2" cy="6.5" r="0.9" fill="#f5e06a"/><circle cx="2" cy="11" r="0.9" fill="#f5e06a"/><circle cx="6.5" cy="2" r="0.9" fill="#f5e06a"/><circle cx="6.5" cy="6.5" r="0.9" fill="#f5e06a"/><circle cx="6.5" cy="11" r="0.9" fill="#f5e06a"/><circle cx="11" cy="2" r="0.9" fill="#f5e06a"/><circle cx="11" cy="6.5" r="0.9" fill="#f5e06a"/><circle cx="11" cy="11" r="0.9" fill="#f5e06a"/></svg>
<div class="t" style="left:686px;top:741.5px;height:16px;line-height:16px;color:#f0f0f0;font-size:12.5px;letter-spacing:-0.35px;letter-spacing:-0.051px;">VerticalGrid</div>
<div style="left:1139px;top:741px;width:21px;height:16px;background:#2f2f2f;border-radius:3px;"></div>
<svg style="left:1139px;top:741px;" width="21" height="16" viewBox="0 0 21 16"><path d="M2.5 8 L5.5 5 H8 V11 H5.5 Z" fill="#9c8a50"/><path d="M18.5 8 L15.5 5 H13 V11 H15.5 Z" fill="#5a5a5a"/></svg>
<svg style="left:1164px;top:743px;" width="12" height="12" viewBox="0 0 12 12"><circle cx="6" cy="6" r="4.3" fill="none" stroke="#8a8a8a" stroke-width="1.1"/></svg>
<div style="left:496px;top:762px;width:18px;height:18px;background:#2b2b2b;border-radius:2px;"></div>
<div style="left:515px;top:762px;width:18px;height:18px;background:#2b2b2b;border-radius:2px;"></div>
<div style="left:534px;top:762px;width:18px;height:18px;background:#2b2b2b;border-radius:2px;"></div>
<div style="left:573px;top:763px;width:16px;height:16px;background:#fde47a;border-radius:2px;"></div>
<svg style="left:593px;top:766px;" width="15" height="10" viewBox="0 0 15 10"><path d="M0.5 5 L3.5 1 H14 V9 H3.5 Z" fill="#d8d8d8"/><circle cx="4.6" cy="5" r="1.2" fill="#383838"/></svg>
<svg style="left:666px;top:768px;" width="15" height="5" viewBox="0 0 15 5"><path d="M0.5 2 H2 M5 2 H10 M12.5 2 H14" stroke="#f0f0f0" stroke-width="1.3"/></svg>
<div class="t" style="left:686px;top:763.5px;height:16px;line-height:16px;color:#f0f0f0;font-size:12.5px;letter-spacing:-0.35px;letter-spacing:-0.127px;">VerticalLine</div>
<div style="left:1139px;top:763px;width:21px;height:16px;background:#2f2f2f;border-radius:3px;"></div>
<svg style="left:1139px;top:763px;" width="21" height="16" viewBox="0 0 21 16"><path d="M2.5 8 L5.5 5 H8 V11 H5.5 Z" fill="#5a5a5a"/><path d="M18.5 8 L15.5 5 H13 V11 H15.5 Z" fill="#8a3fa8"/></svg>
<svg style="left:1164px;top:765px;" width="12" height="12" viewBox="0 0 12 12"><circle cx="6" cy="6" r="4.3" fill="none" stroke="#8a8a8a" stroke-width="1.1"/></svg>
<div style="left:496px;top:784px;width:18px;height:18px;background:#2b2b2b;border-radius:2px;"></div>
<div style="left:515px;top:784px;width:18px;height:18px;background:#2b2b2b;border-radius:2px;"></div>
<div style="left:534px;top:784px;width:18px;height:18px;background:#2b2b2b;border-radius:2px;"></div>
<svg style="left:516px;top:787px;" width="16" height="12" viewBox="0 0 16 12"><path d="M1 6 Q8 -1 15 6 Q8 13 1 6 Z" fill="none" stroke="#d0d0d0" stroke-width="1.1"/><circle cx="8" cy="6" r="2.5" fill="#d0d0d0"/></svg>
<div style="left:573px;top:785px;width:16px;height:16px;background:#c8c8c8;border-radius:2px;"></div>
<svg style="left:593px;top:788px;" width="15" height="10" viewBox="0 0 15 10"><path d="M0.5 5 L3.5 1 H14 V9 H3.5 Z" fill="#d8d8d8"/><circle cx="4.6" cy="5" r="1.2" fill="#383838"/></svg>
<div style="left:611px;top:785px;width:14px;height:16px;background:#333;border-radius:2px;"></div>
<svg style="left:615px;top:788px;" width="8" height="10" viewBox="0 0 8 10"><path d="M1.5 1.5 L5 5 L1.5 8.5" fill="none" stroke="#8a8a8a" stroke-width="1.1"/></svg>
<div style="left:626px;top:785px;width:14px;height:16px;background:#353535;border-radius:2px;"></div>
<svg style="left:648px;top:786px;" width="15" height="13" viewBox="0 0 15 13"><path d="M0.5 1 H5.5 L7 3 H14 V12 H0.5 Z" fill="#d0d0d0"/><path d="M0.5 3.8 H14" stroke="#383838" stroke-width="0.8"/></svg>
<div class="t" style="left:667px;top:785.5px;height:16px;line-height:16px;color:#f0f0f0;font-size:12.5px;letter-spacing:-0.35px;letter-spacing:-0.056px;">HorizontalGrid</div>
<svg style="left:1164px;top:787px;" width="12" height="12" viewBox="0 0 12 12"><circle cx="6" cy="6" r="4.3" fill="none" stroke="#8a8a8a" stroke-width="1.1"/></svg>
<div style="left:496px;top:806px;width:18px;height:18px;background:#2b2b2b;border-radius:2px;"></div>
<div style="left:515px;top:806px;width:18px;height:18px;background:#2b2b2b;border-radius:2px;"></div>
<div style="left:534px;top:806px;width:18px;height:18px;background:#2b2b2b;border-radius:2px;"></div>
<svg style="left:516px;top:809px;" width="16" height="12" viewBox="0 0 16 12"><path d="M1 6 Q8 -1 15 6 Q8 13 1 6 Z" fill="none" stroke="#d0d0d0" stroke-width="1.1"/><circle cx="8" cy="6" r="2.5" fill="#d0d0d0"/></svg>
<div style="left:573px;top:807px;width:16px;height:16px;background:#fde47a;border-radius:2px;"></div>
<svg style="left:593px;top:810px;" width="15" height="10" viewBox="0 0 15 10"><path d="M0.5 5 L3.5 1 H14 V9 H3.5 Z" fill="#d8d8d8"/><circle cx="4.6" cy="5" r="1.2" fill="#383838"/></svg>
<div style="left:611px;top:807px;width:14px;height:16px;background:#333;border-radius:2px;"></div>
<svg style="left:613px;top:811px;" width="10" height="8" viewBox="0 0 10 8"><path d="M1.5 1.5 L5 5 L8.5 1.5" fill="none" stroke="#8a8a8a" stroke-width="1.1"/></svg>
<svg style="left:630px;top:812px;" width="6" height="6" viewBox="0 0 6 6"><circle cx="3" cy="3" r="2.6" fill="#f0f0f0"/></svg>
<svg style="left:648px;top:808px;" width="14" height="14" viewBox="0 0 14 14"><rect x="1.5" y="1.5" width="11" height="11" fill="none" stroke="#f5e06a" stroke-width="1.3" stroke-dasharray="4.2 1.8"/></svg>
<div class="t" style="left:667px;top:807.5px;height:16px;line-height:16px;color:#f0f0f0;font-size:12.5px;letter-spacing:-0.35px;letter-spacing:-0.327px;">CenterRectangle</div>
<div style="left:1139px;top:807px;width:21px;height:16px;background:#2f2f2f;border-radius:3px;"></div>
<svg style="left:1139px;top:807px;" width="21" height="16" viewBox="0 0 21 16"><path d="M2.5 8 L5.5 5 H8 V11 H5.5 Z" fill="#5a5a5a"/><path d="M18.5 8 L15.5 5 H13 V11 H15.5 Z" fill="#8a3fa8"/></svg>
<svg style="left:1164px;top:809px;" width="12" height="12" viewBox="0 0 12 12"><circle cx="6" cy="6" r="4.3" fill="none" stroke="#8a8a8a" stroke-width="1.1"/></svg>
<svg style="left:630px;top:826px;" width="20" height="70" viewBox="0 0 20 70"><path d="M4.5 0 V55.5 M4.5 11.5 H12 M4.5 33.5 H12 M4.5 55.5 H12" fill="none" stroke="#b0b0b0" stroke-width="1" stroke-dasharray="1 1.5"/></svg>
<div class="t" style="left:647px;top:829.5px;height:16px;line-height:16px;color:#f0f0f0;font-size:12.5px;letter-spacing:-0.35px;letter-spacing:-0.494px;">Rectangle.Corner Radius</div>
<div style="left:978px;top:829px;width:94px;height:16px;background:#2f2f2f;border-radius:3px;"></div>
<div class="t" style="left:983px;top:829.5px;height:16px;line-height:16px;color:#6a6a6a;font-size:12.5px;">#</div>
<div class="t" style="left:995px;top:829.5px;height:16px;line-height:16px;color:#8a8a8a;font-size:12.5px;letter-spacing:-0.35px;letter-spacing:-0.330px;">0.0</div>
<div class="t" style="left:1073px;top:829px;height:16px;line-height:16px;color:#8a8a8a;font-size:11px;">+</div>
<div style="left:1081px;top:829px;width:93px;height:16px;background:#2f2f2f;border-radius:3px;"></div>
<div class="t" style="left:1086px;top:829.5px;height:16px;line-height:16px;color:#6a6a6a;font-size:12.5px;">#</div>
<div class="t" style="left:1098px;top:829.5px;height:16px;line-height:16px;color:#e0e0e0;font-size:12.5px;letter-spacing:-0.35px;letter-spacing:-0.361px;">70.0</div>
<svg style="left:1152px;top:832px;" width="10" height="10" viewBox="0 0 10 10"><path d="M5 0.8 L9.2 5 L5 9.2 L0.8 5 Z" fill="#2fd06c"/></svg>
<svg style="left:1166px;top:833px;" width="7" height="8" viewBox="0 0 7 8"><path d="M0.5 1 H3 L6 4 L3 7 H0.5 Z" fill="#8a8a8a"/></svg>
<div class="t" style="left:647px;top:851.5px;height:16px;line-height:16px;color:#f0f0f0;font-size:12.5px;letter-spacing:-0.35px;letter-spacing:-0.599px;">Rectangle.Size.H</div>
<div style="left:978px;top:851px;width:94px;height:16px;background:#2f2f2f;border-radius:3px;"></div>
<div class="t" style="left:983px;top:851.5px;height:16px;line-height:16px;color:#6a6a6a;font-size:12.5px;">#</div>
<div class="t" style="left:995px;top:851.5px;height:16px;line-height:16px;color:#8a8a8a;font-size:12.5px;letter-spacing:-0.35px;letter-spacing:-0.330px;">0.0</div>
<div class="t" style="left:1073px;top:851px;height:16px;line-height:16px;color:#8a8a8a;font-size:11px;">+</div>
<div style="left:1081px;top:851px;width:93px;height:16px;background:#2f2f2f;border-radius:3px;"></div>
<div class="t" style="left:1086px;top:851.5px;height:16px;line-height:16px;color:#8a8a8a;font-size:12.5px;">H</div>
<div class="t" style="left:1098px;top:851.5px;height:16px;line-height:16px;color:#e0e0e0;font-size:12.5px;letter-spacing:-0.35px;letter-spacing:-0.336px;">700.0</div>
<svg style="left:1152px;top:854px;" width="10" height="10" viewBox="0 0 10 10"><path d="M5 0.8 L9.2 5 L5 9.2 L0.8 5 Z" fill="#d0d0d0"/></svg>
<svg style="left:1166px;top:855px;" width="7" height="8" viewBox="0 0 7 8"><path d="M0.5 1 H3 L6 4 L3 7 H0.5 Z" fill="#c85ae8"/></svg>
<div class="t" style="left:647px;top:873.5px;height:16px;line-height:16px;color:#f0f0f0;font-size:12.5px;letter-spacing:-0.35px;letter-spacing:-0.635px;">Rectangle.Size.W</div>
<div style="left:1081px;top:873px;width:93px;height:16px;background:#2f2f2f;border-radius:3px;"></div>
<div class="t" style="left:1084px;top:873.5px;height:16px;line-height:16px;color:#8a8a8a;font-size:12.5px;">W</div>
<div class="t" style="left:1098px;top:873.5px;height:16px;line-height:16px;color:#e0e0e0;font-size:12.5px;letter-spacing:-0.35px;letter-spacing:-0.336px;">700.0</div>
<svg style="left:1152px;top:876px;" width="10" height="10" viewBox="0 0 10 10"><path d="M5 0.8 L9.2 5 L5 9.2 L0.8 5 Z" fill="#d0d0d0"/></svg>
<svg style="left:1166px;top:877px;" width="7" height="8" viewBox="0 0 7 8"><path d="M0.5 1 H3 L6 4 L3 7 H0.5 Z" fill="#c85ae8"/></svg>
<div style="left:496px;top:894px;width:18px;height:18px;background:#2b2b2b;border-radius:2px;"></div>
<div style="left:515px;top:894px;width:18px;height:18px;background:#2b2b2b;border-radius:2px;"></div>
<div style="left:534px;top:894px;width:18px;height:18px;background:#2b2b2b;border-radius:2px;"></div>
<svg style="left:516px;top:897px;" width="16" height="12" viewBox="0 0 16 12"><path d="M1 6 Q8 -1 15 6 Q8 13 1 6 Z" fill="none" stroke="#d0d0d0" stroke-width="1.1"/><circle cx="8" cy="6" r="2.5" fill="#d0d0d0"/></svg>
<div style="left:573px;top:895px;width:16px;height:16px;background:#fde47a;border-radius:2px;"></div>
<svg style="left:593px;top:898px;" width="15" height="10" viewBox="0 0 15 10"><path d="M0.5 5 L3.5 1 H14 V9 H3.5 Z" fill="#d8d8d8"/><circle cx="4.6" cy="5" r="1.2" fill="#383838"/></svg>
<svg style="left:648px;top:896px;" width="14" height="14" viewBox="0 0 14 14"><rect x="1.5" y="1.5" width="11" height="11" fill="none" stroke="#f5e06a" stroke-width="1.3" stroke-dasharray="4.2 1.8"/></svg>
<div class="t" style="left:667px;top:895.5px;height:16px;line-height:16px;color:#f0f0f0;font-size:12.5px;letter-spacing:-0.35px;letter-spacing:-0.524px;">RectangleBG</div>
<div style="left:1139px;top:895px;width:21px;height:16px;background:#2f2f2f;border-radius:3px;"></div>
<svg style="left:1139px;top:895px;" width="21" height="16" viewBox="0 0 21 16"><path d="M2.5 8 L5.5 5 H8 V11 H5.5 Z" fill="#9c8a50"/><path d="M18.5 8 L15.5 5 H13 V11 H15.5 Z" fill="#5a5a5a"/></svg>
<svg style="left:1164px;top:897px;" width="12" height="12" viewBox="0 0 12 12"><circle cx="6" cy="6" r="4.3" fill="none" stroke="#8a8a8a" stroke-width="1.1"/></svg>
<div style="left:1177px;top:673px;width:16px;height:303px;background:#333;"></div>
<div style="left:1181px;top:674px;width:10px;height:287px;background:#4c4c4c;border-radius:5px;"></div>
<div style="left:495px;top:965px;width:682px;height:8px;background:#4c4c4c;border-radius:4px;"></div>
<div style="left:494px;top:976px;width:699px;height:22px;background:#464646;"></div>
<div style="left:498px;top:977.5px;width:19px;height:19px;background:#222;border-radius:4px;border:1px solid #3c3c3c;"></div>
<svg style="left:500px;top:982px;" width="15" height="10" viewBox="0 0 15 10"><path d="M0.5 5 L3.5 1 H14 V9 H3.5 Z" fill="#d8d8d8"/><circle cx="4.6" cy="5" r="1.2" fill="#222"/></svg>
<div class="t" style="left:521px;top:979.5px;height:16px;line-height:16px;color:#e6e6e6;font-size:12.5px;letter-spacing:-0.35px;letter-spacing:-0.528px;">1 selected</div>
<div style="left:984px;top:977.5px;width:19px;height:19px;background:#222;border-radius:4px;"></div>
<svg style="left:984px;top:977.5px;" width="19" height="19" viewBox="0 0 19 19"><rect x="4" y="4" width="11" height="11" fill="none" stroke="#d0d0d0" stroke-width="1.2"/><rect x="8" y="8" width="3" height="3" fill="#d0d0d0"/></svg>
<div style="left:1007px;top:977.5px;width:184px;height:19px;background:#555;border-radius:4px;"></div>
<div style="left:1008px;top:978.5px;width:86px;height:17px;background:#222;border-radius:3px;"></div>
<svg style="left:1013px;top:981.5px;" width="13" height="11" viewBox="0 0 13 11"><path d="M1 1.5 H12 M3 5.5 H12 M1 9.5 H10" stroke="#2fd06c" stroke-width="1.7"/></svg>
<div class="t" style="left:1030px;top:979.5px;height:16px;line-height:16px;color:#e6e6e6;font-size:12.5px;letter-spacing:-0.35px;letter-spacing:-0.314px;">Time Editor</div>
<svg style="left:1101px;top:980.5px;" width="14" height="13" viewBox="0 0 14 13"><path d="M2 1 V11.5 H13" fill="none" stroke="#d0d0d0" stroke-width="1.1"/><path d="M2 11.5 L6 7 L12 4" fill="none" stroke="#d0d0d0" stroke-width="1.1"/></svg>
<div class="t" style="left:1119px;top:979.5px;height:16px;line-height:16px;color:#e6e6e6;font-size:12.5px;letter-spacing:-0.35px;letter-spacing:-0.315px;">Graph Editor</div>
<div style="left:494px;top:1004px;width:1420px;height:22px;background:#3a3a3a;"></div>
<div style="left:498px;top:1009px;width:2px;height:2px;background:#8a8a8a;"></div>
<div style="left:498px;top:1014px;width:2px;height:2px;background:#8a8a8a;"></div>
<div style="left:498px;top:1019px;width:2px;height:2px;background:#8a8a8a;"></div>
<div style="left:506px;top:1005px;width:19px;height:19px;background:#222;border-radius:4px;"></div>
<svg style="left:506px;top:1005px;" width="19" height="19" viewBox="0 0 19 19"><path d="M3.5 3.5 H15.5 V12.5 H12 V15.5 L9 12.5 H3.5 Z" fill="#e0e0e0"/><path d="M5.5 5.5 H13.5 M5.5 7.5 H13.5 M5.5 9.5 H13.5" stroke="#222" stroke-width="1"/><path d="M7.5 4 V11" stroke="#222" stroke-width="0.8"/><path d="M15 18 H18 V15 Z" fill="#2fd06c"/></svg>
<div style="left:528px;top:1008px;width:18px;height:14px;background:#e0686e;border-radius:2px;"></div>
<div class="t" style="left:533px;top:1007.5px;height:16px;line-height:16px;color:#5a1a20;font-size:11.5px;">0</div>
<svg style="left:553px;top:1012px;" width="7" height="7" viewBox="0 0 7 7"><circle cx="3.5" cy="3.5" r="3" fill="#e0686e"/></svg>
<div class="t" style="left:565px;top:1008px;height:16px;line-height:16px;color:#e0e0e0;font-size:12.5px;letter-spacing:-0.5px;letter-spacing:-0.470px;">Save reminder: 222 minutes since your last save.</div>
<div style="left:1477px;top:1006px;width:80px;height:18px;background:#d4b95e;border-radius:1px;"></div>
<div class="t" style="left:1482px;top:1007.5px;height:16px;line-height:16px;color:#3a3010;font-size:12.5px;letter-spacing:-0.35px;letter-spacing:-0.626px;">Feedback</div>
<div style="left:1560px;top:1006px;width:109px;height:18px;background:#2fd06c;border-radius:1px;"></div>
<div class="t" style="left:1565px;top:1007.5px;height:16px;line-height:16px;color:#0a3a1a;font-size:12.5px;letter-spacing:-0.35px;letter-spacing:-0.434px;">Upgrade to Pro</div>
<div style="left:1672px;top:1006px;width:130px;height:18px;background:#c58af9;border-radius:1px;"></div>
<div class="t" style="left:1677px;top:1007.5px;height:16px;line-height:16px;color:#3a1a5a;font-size:12.5px;letter-spacing:-0.35px;letter-spacing:-0.366px;">New Beta Available</div>
<div style="left:1805px;top:1006px;width:107px;height:18px;background:#3ba4f5;border-radius:1px;"></div>
<div class="t" style="left:1810px;top:1007.5px;height:16px;line-height:16px;color:#0a2a4a;font-size:12.5px;letter-spacing:-0.35px;letter-spacing:-0.473px;">Tips and Tricks</div>
<svg style="left:1537px;top:1008px;" width="14" height="14" viewBox="0 0 14 14"><rect x="2" y="2" width="9" height="11" fill="#f4f4f4"/><path d="M5 11 L11 4 L13 6 L7 12.5 Z" fill="#e8703a"/></svg>
<svg style="left:1649px;top:1009px;" width="16" height="12" viewBox="0 0 16 12"><path d="M1 4 Q4 1 6 5 V11 H2 Z M15 4 Q12 1 10 5 V11 H14 Z" fill="#f5c842"/></svg>
<svg style="left:1783px;top:1008px;" width="14" height="14" viewBox="0 0 14 14"><circle cx="7" cy="7.5" r="5.5" fill="#f5c842"/><path d="M3 3 L8 1 L9 5 Z" fill="#e8506a"/><circle cx="5" cy="7" r="0.9" fill="#5a3a10"/><circle cx="9" cy="7" r="0.9" fill="#5a3a10"/></svg>
<svg style="left:1892px;top:1008px;" width="14" height="14" viewBox="0 0 14 14"><path d="M12.5 1.5 Q7 2 4.5 7.5 L6.5 9.5 Q12 7 12.5 1.5 Z" fill="#e8e8f0"/><path d="M4.5 7.5 L2 8 L3.5 5.5 Z M6.5 9.5 L6 12 L8.5 10.5 Z" fill="#e8506a"/><path d="M3.5 10.5 L1.5 12.5" stroke="#f5a030" stroke-width="1.3"/></svg>
<div style="left:1197px;top:630px;width:717px;height:335px;background:#222;"></div>
<div style="left:1197px;top:671px;width:717px;height:294px;background:#2b2b2b;"></div>
<div style="left:1193px;top:630px;width:7px;height:370px;background:#222;"></div>
<div style="left:1207px;top:654px;width:701px;height:17px;background:#464646;"></div>
<div style="left:1907px;top:654px;width:5px;height:17px;background:#6ec4b0;border-radius:1px;"></div>
<svg style="left:0px;top:0px;" width="1920" height="660" viewBox="0 0 1920 660"><path d="M1207.5 646 V654" stroke="#b0b0b0" stroke-width="1"/><path d="M1215.9 650 V654" stroke="#9a9a9a" stroke-width="1"/><path d="M1224.3 650 V654" stroke="#9a9a9a" stroke-width="1"/><path d="M1232.7 650 V654" stroke="#9a9a9a" stroke-width="1"/><path d="M1241.1 650 V654" stroke="#9a9a9a" stroke-width="1"/><path d="M1249.5 646 V654" stroke="#b0b0b0" stroke-width="1"/><path d="M1257.9 650 V654" stroke="#9a9a9a" stroke-width="1"/><path d="M1266.3 650 V654" stroke="#9a9a9a" stroke-width="1"/><path d="M1274.7 650 V654" stroke="#9a9a9a" stroke-width="1"/><path d="M1283.1 650 V654" stroke="#9a9a9a" stroke-width="1"/><path d="M1291.5 646 V654" stroke="#b0b0b0" stroke-width="1"/><path d="M1299.9 650 V654" stroke="#9a9a9a" stroke-width="1"/><path d="M1308.3 650 V654" stroke="#9a9a9a" stroke-width="1"/><path d="M1316.7 650 V654" stroke="#9a9a9a" stroke-width="1"/><path d="M1325.1 650 V654" stroke="#9a9a9a" stroke-width="1"/><path d="M1333.5 646 V654" stroke="#b0b0b0" stroke-width="1"/><path d="M1341.9 650 V654" stroke="#9a9a9a" stroke-width="1"/><path d="M1350.3 650 V654" stroke="#9a9a9a" stroke-width="1"/><path d="M1358.7 650 V654" stroke="#9a9a9a" stroke-width="1"/><path d="M1367.1 650 V654" stroke="#9a9a9a" stroke-width="1"/><path d="M1375.5 646 V654" stroke="#b0b0b0" stroke-width="1"/><path d="M1383.9 650 V654" stroke="#9a9a9a" stroke-width="1"/><path d="M1392.3 650 V654" stroke="#9a9a9a" stroke-width="1"/><path d="M1400.7 650 V654" stroke="#9a9a9a" stroke-width="1"/><path d="M1409.1 650 V654" stroke="#9a9a9a" stroke-width="1"/><path d="M1417.5 646 V654" stroke="#b0b0b0" stroke-width="1"/><path d="M1425.9 650 V654" stroke="#9a9a9a" stroke-width="1"/><path d="M1434.3 650 V654" stroke="#9a9a9a" stroke-width="1"/><path d="M1442.7 650 V654" stroke="#9a9a9a" stroke-width="1"/><path d="M1451.1 650 V654" stroke="#9a9a9a" stroke-width="1"/><path d="M1459.5 646 V654" stroke="#b0b0b0" stroke-width="1"/><path d="M1467.9 650 V654" stroke="#9a9a9a" stroke-width="1"/><path d="M1476.3 650 V654" stroke="#9a9a9a" stroke-width="1"/><path d="M1484.7 650 V654" stroke="#9a9a9a" stroke-width="1"/><path d="M1493.1 650 V654" stroke="#9a9a9a" stroke-width="1"/><path d="M1501.5 646 V654" stroke="#b0b0b0" stroke-width="1"/><path d="M1509.9 650 V654" stroke="#9a9a9a" stroke-width="1"/><path d="M1518.3 650 V654" stroke="#9a9a9a" stroke-width="1"/><path d="M1526.7 650 V654" stroke="#9a9a9a" stroke-width="1"/><path d="M1535.1 650 V654" stroke="#9a9a9a" stroke-width="1"/><path d="M1543.5 646 V654" stroke="#b0b0b0" stroke-width="1"/><path d="M1551.9 650 V654" stroke="#9a9a9a" stroke-width="1"/><path d="M1560.3 650 V654" stroke="#9a9a9a" stroke-width="1"/><path d="M1568.7 650 V654" stroke="#9a9a9a" stroke-width="1"/><path d="M1577.1 650 V654" stroke="#9a9a9a" stroke-width="1"/><path d="M1585.5 646 V654" stroke="#b0b0b0" stroke-width="1"/><path d="M1593.9 650 V654" stroke="#9a9a9a" stroke-width="1"/><path d="M1602.3 650 V654" stroke="#9a9a9a" stroke-width="1"/><path d="M1610.7 650 V654" stroke="#9a9a9a" stroke-width="1"/><path d="M1619.1 650 V654" stroke="#9a9a9a" stroke-width="1"/><path d="M1627.5 646 V654" stroke="#b0b0b0" stroke-width="1"/><path d="M1635.9 650 V654" stroke="#9a9a9a" stroke-width="1"/><path d="M1644.3 650 V654" stroke="#9a9a9a" stroke-width="1"/><path d="M1652.7 650 V654" stroke="#9a9a9a" stroke-width="1"/><path d="M1661.1 650 V654" stroke="#9a9a9a" stroke-width="1"/><path d="M1669.5 646 V654" stroke="#b0b0b0" stroke-width="1"/><path d="M1677.9 650 V654" stroke="#9a9a9a" stroke-width="1"/><path d="M1686.3 650 V654" stroke="#9a9a9a" stroke-width="1"/><path d="M1694.7 650 V654" stroke="#9a9a9a" stroke-width="1"/><path d="M1703.1 650 V654" stroke="#9a9a9a" stroke-width="1"/><path d="M1711.5 646 V654" stroke="#b0b0b0" stroke-width="1"/><path d="M1719.9 650 V654" stroke="#9a9a9a" stroke-width="1"/><path d="M1728.3 650 V654" stroke="#9a9a9a" stroke-width="1"/><path d="M1736.7 650 V654" stroke="#9a9a9a" stroke-width="1"/><path d="M1745.1 650 V654" stroke="#9a9a9a" stroke-width="1"/><path d="M1753.5 646 V654" stroke="#b0b0b0" stroke-width="1"/><path d="M1761.9 650 V654" stroke="#9a9a9a" stroke-width="1"/><path d="M1770.3 650 V654" stroke="#9a9a9a" stroke-width="1"/><path d="M1778.7 650 V654" stroke="#9a9a9a" stroke-width="1"/><path d="M1787.1 650 V654" stroke="#9a9a9a" stroke-width="1"/><path d="M1795.5 646 V654" stroke="#b0b0b0" stroke-width="1"/><path d="M1803.9 650 V654" stroke="#9a9a9a" stroke-width="1"/><path d="M1812.3 650 V654" stroke="#9a9a9a" stroke-width="1"/><path d="M1820.7 650 V654" stroke="#9a9a9a" stroke-width="1"/><path d="M1829.1 650 V654" stroke="#9a9a9a" stroke-width="1"/><path d="M1837.5 646 V654" stroke="#b0b0b0" stroke-width="1"/><path d="M1845.9 650 V654" stroke="#9a9a9a" stroke-width="1"/><path d="M1854.3 650 V654" stroke="#9a9a9a" stroke-width="1"/><path d="M1862.7 650 V654" stroke="#9a9a9a" stroke-width="1"/><path d="M1871.1 650 V654" stroke="#9a9a9a" stroke-width="1"/><path d="M1879.5 646 V654" stroke="#b0b0b0" stroke-width="1"/><path d="M1887.9 650 V654" stroke="#9a9a9a" stroke-width="1"/><path d="M1896.3 650 V654" stroke="#9a9a9a" stroke-width="1"/><path d="M1904.7 650 V654" stroke="#9a9a9a" stroke-width="1"/></svg>
<div class="t" style="left:1201.5px;top:630.5px;height:16px;line-height:16px;color:#d0d0d0;font-size:13px;">0</div>
<div class="t" style="left:1228.0px;top:630.5px;width:40px;text-align:center;height:16px;line-height:16px;color:#d0d0d0;font-size:12.5px;letter-spacing:-0.2px;">15</div>
<div class="t" style="left:1270.0px;top:630.5px;width:40px;text-align:center;height:16px;line-height:16px;color:#d0d0d0;font-size:12.5px;letter-spacing:-0.2px;">30</div>
<div class="t" style="left:1312.0px;top:630.5px;width:40px;text-align:center;height:16px;line-height:16px;color:#d0d0d0;font-size:12.5px;letter-spacing:-0.2px;">45</div>
<div class="t" style="left:1354.0px;top:630.5px;width:40px;text-align:center;height:16px;line-height:16px;color:#d0d0d0;font-size:12.5px;letter-spacing:-0.2px;">60</div>
<div class="t" style="left:1396.0px;top:630.5px;width:40px;text-align:center;height:16px;line-height:16px;color:#d0d0d0;font-size:12.5px;letter-spacing:-0.2px;">75</div>
<div class="t" style="left:1438.0px;top:630.5px;width:40px;text-align:center;height:16px;line-height:16px;color:#d0d0d0;font-size:12.5px;letter-spacing:-0.2px;">90</div>
<div class="t" style="left:1480.0px;top:630.5px;width:40px;text-align:center;height:16px;line-height:16px;color:#d0d0d0;font-size:12.5px;letter-spacing:-0.2px;">105</div>
<div class="t" style="left:1522.0px;top:630.5px;width:40px;text-align:center;height:16px;line-height:16px;color:#d0d0d0;font-size:12.5px;letter-spacing:-0.2px;">120</div>
<div class="t" style="left:1564.0px;top:630.5px;width:40px;text-align:center;height:16px;line-height:16px;color:#d0d0d0;font-size:12.5px;letter-spacing:-0.2px;">135</div>
<div class="t" style="left:1606.0px;top:630.5px;width:40px;text-align:center;height:16px;line-height:16px;color:#d0d0d0;font-size:12.5px;letter-spacing:-0.2px;">150</div>
<div class="t" style="left:1648.0px;top:630.5px;width:40px;text-align:center;height:16px;line-height:16px;color:#d0d0d0;font-size:12.5px;letter-spacing:-0.2px;">165</div>
<div class="t" style="left:1690.0px;top:630.5px;width:40px;text-align:center;height:16px;line-height:16px;color:#d0d0d0;font-size:12.5px;letter-spacing:-0.2px;">180</div>
<div class="t" style="left:1732.0px;top:630.5px;width:40px;text-align:center;height:16px;line-height:16px;color:#d0d0d0;font-size:12.5px;letter-spacing:-0.2px;">195</div>
<div class="t" style="left:1774.0px;top:630.5px;width:40px;text-align:center;height:16px;line-height:16px;color:#d0d0d0;font-size:12.5px;letter-spacing:-0.2px;">210</div>
<div class="t" style="left:1816.0px;top:630.5px;width:40px;text-align:center;height:16px;line-height:16px;color:#d0d0d0;font-size:12.5px;letter-spacing:-0.2px;">225</div>
<div class="t" style="left:1858.0px;top:630.5px;width:40px;text-align:center;height:16px;line-height:16px;color:#d0d0d0;font-size:12.5px;letter-spacing:-0.2px;">240</div>
<div style="left:1207px;top:674px;width:700px;height:18px;background:#f0a868;border-top:1px solid #fff;border-bottom:1px solid #fff;background:repeating-linear-gradient(135deg,rgba(255,255,255,0.14) 0 9px,rgba(255,255,255,0) 9px 18px),repeating-conic-gradient(#e88a48 0 25%,#fbd8a0 0 50%) 0 0/2px 2px;"></div>
<div class="t" style="left:1215px;top:675px;height:16px;line-height:16px;color:#fff;font-size:12.5px;letter-spacing:-0.35px;opacity:0.9;letter-spacing:-0.453px;">AddGridSizes</div>
<div style="left:1207px;top:696px;width:700px;height:18px;background:#c4c4c4;border-radius:3px;"></div>
<div class="t" style="left:1215px;top:697px;height:16px;line-height:16px;color:#222;font-size:12.5px;letter-spacing:-0.35px;letter-spacing:-0.051px;">VerticalGrid</div>
<div style="left:1207px;top:718px;width:700px;height:18px;background:#b4dc70;background:repeating-linear-gradient(135deg,#c8f07c 0 6.4px,#b0d86c 6.4px 12.8px);"></div>
<div class="t" style="left:1215px;top:719px;height:16px;line-height:16px;color:#222;font-size:12.5px;letter-spacing:-0.35px;letter-spacing:-0.188px;">VerticalLineDistance</div>
<div style="left:1207px;top:740px;width:700px;height:18px;background:#fde47a;border-radius:3px;"></div>
<div class="t" style="left:1215px;top:741px;height:16px;line-height:16px;color:#222;font-size:12.5px;letter-spacing:-0.35px;letter-spacing:-0.051px;">VerticalGrid</div>
<div style="left:1207px;top:762px;width:700px;height:18px;background:#fde47a;border-radius:3px;"></div>
<div class="t" style="left:1215px;top:763px;height:16px;line-height:16px;color:#222;font-size:12.5px;letter-spacing:-0.35px;letter-spacing:-0.127px;">VerticalLine</div>
<div style="left:1207px;top:784px;width:700px;height:18px;background:#c4c4c4;border-radius:3px;"></div>
<div class="t" style="left:1215px;top:785px;height:16px;line-height:16px;color:#222;font-size:12.5px;letter-spacing:-0.35px;letter-spacing:-0.056px;">HorizontalGrid</div>
<div style="left:1207px;top:806px;width:700px;height:18px;background:#fde47a;border-radius:3px;"></div>
<div class="t" style="left:1215px;top:807px;height:16px;line-height:16px;color:#222;font-size:12.5px;letter-spacing:-0.35px;letter-spacing:-0.327px;">CenterRectangle</div>
<div style="left:1207px;top:894px;width:700px;height:18px;background:#fde47a;border-radius:3px;"></div>
<div class="t" style="left:1215px;top:895px;height:16px;line-height:16px;color:#222;font-size:12.5px;letter-spacing:-0.35px;letter-spacing:-0.524px;">RectangleBG</div>
<svg style="left:0px;top:0px;" width="1920" height="900" viewBox="0 0 1920 900"><path d="M1211.0 836 H1301.0" stroke="#f5e06a" stroke-width="1.7"/><path d="M1309.0 836 H1343.0" stroke="#f5e06a" stroke-width="1.7"/><path d="M1351.0 836 H1427.0" stroke="#f5e06a" stroke-width="1.7"/><path d="M1439.0 836 H1455.0" stroke="#f5e06a" stroke-width="1.7" stroke-dasharray="4 4.5"/><path d="M1463.0 836 H1525.0" stroke="#f5e06a" stroke-width="1.7"/><path d="M1537.0 836 H1609.0" stroke="#f5e06a" stroke-width="1.7" stroke-dasharray="4 4.5"/><path d="M1617.0 836 H1900.2" stroke="#f5e06a" stroke-width="1.7"/><path d="M1207.0 831.8 L1211.2 836 L1207.0 840.2 L1202.8 836 Z" fill="#dcdcdc"/><path d="M1305.0 831.8 L1309.2 836 L1305.0 840.2 L1300.8 836 Z" fill="#dcdcdc"/><path d="M1347.0 831.8 L1351.2 836 L1347.0 840.2 L1342.8 836 Z" fill="#dcdcdc"/><path d="M1431.0 831.8 L1435.2 836 L1431.0 840.2 L1426.8 836 Z" fill="#dcdcdc"/><path d="M1459.0 831.8 L1463.2 836 L1459.0 840.2 L1454.8 836 Z" fill="#dcdcdc"/><path d="M1529.0 831.8 L1533.2 836 L1529.0 840.2 L1524.8 836 Z" fill="#dcdcdc"/><path d="M1613.0 831.8 L1617.2 836 L1613.0 840.2 L1608.8 836 Z" fill="#dcdcdc"/><path d="M1904.2 831.8 L1908.4 836 L1904.2 840.2 L1900.0 836 Z" fill="#dcdcdc"/><path d="M1233.4 858 H1287.0" stroke="#f5e06a" stroke-width="1.7"/><path d="M1295.0 858 H1359.8" stroke="#f5e06a" stroke-width="1.7"/><path d="M1371.8 858 H1404.6" stroke="#f5e06a" stroke-width="1.7" stroke-dasharray="4 4.5"/><path d="M1412.6 858 H1469.0" stroke="#f5e06a" stroke-width="1.7"/><path d="M1477.0 858 H1539.0" stroke="#f5e06a" stroke-width="1.7"/><path d="M1547.0 858 H1623.0" stroke="#f5e06a" stroke-width="1.7"/><path d="M1229.4 853.8 L1233.6 858 L1229.4 862.2 L1225.2 858 Z" fill="#dcdcdc"/><path d="M1291.0 853.8 L1295.2 858 L1291.0 862.2 L1286.8 858 Z" fill="#dcdcdc"/><path d="M1363.8 853.8 L1368.0 858 L1363.8 862.2 L1359.6 858 Z" fill="#dcdcdc"/><path d="M1408.6 853.8 L1412.8 858 L1408.6 862.2 L1404.4 858 Z" fill="#dcdcdc"/><path d="M1473.0 853.8 L1477.2 858 L1473.0 862.2 L1468.8 858 Z" fill="#dcdcdc"/><path d="M1543.0 853.8 L1547.2 858 L1543.0 862.2 L1538.8 858 Z" fill="#dcdcdc"/><path d="M1627.0 853.8 L1631.2 858 L1627.0 862.2 L1622.8 858 Z" fill="#dcdcdc"/><path d="M1267.0 880 H1315.0" stroke="#f5e06a" stroke-width="1.7"/><path d="M1323.0 880 H1343.0" stroke="#f5e06a" stroke-width="1.7"/><path d="M1355.0 880 H1404.6" stroke="#f5e06a" stroke-width="1.7" stroke-dasharray="4 4.5"/><path d="M1412.6 880 H1511.0" stroke="#f5e06a" stroke-width="1.7"/><path d="M1519.0 880 H1623.0" stroke="#f5e06a" stroke-width="1.7"/><path d="M1263.0 875.8 L1267.2 880 L1263.0 884.2 L1258.8 880 Z" fill="#dcdcdc"/><path d="M1319.0 875.8 L1323.2 880 L1319.0 884.2 L1314.8 880 Z" fill="#dcdcdc"/><path d="M1347.0 875.8 L1351.2 880 L1347.0 884.2 L1342.8 880 Z" fill="#dcdcdc"/><path d="M1408.6 875.8 L1412.8 880 L1408.6 884.2 L1404.4 880 Z" fill="#dcdcdc"/><path d="M1515.0 875.8 L1519.2 880 L1515.0 884.2 L1510.8 880 Z" fill="#dcdcdc"/><path d="M1627.0 875.8 L1631.2 880 L1627.0 884.2 L1622.8 880 Z" fill="#dcdcdc"/></svg>
<div style="left:1206px;top:654px;width:2px;height:308px;background:#5f9e8f;"></div>
<div style="left:1202px;top:653px;width:6px;height:18px;background:#6ec4b0;border-radius:1px;"></div>
<svg style="left:1199px;top:644px;" width="16" height="10" viewBox="0 0 16 10"><path d="M0.5 0.5 H14.5 L7.5 9.5 Z" fill="#6ec4b0"/></svg>
<div style="left:1201px;top:965px;width:711px;height:8px;background:#4c4c4c;border-radius:4px;"></div>
<div style="left:1200px;top:976px;width:714px;height:22px;background:#464646;"></div>
<div style="left:1202px;top:977.5px;width:20px;height:19px;background:#222;border-radius:4px;"></div>
<svg style="left:1202px;top:977.5px;" width="20" height="19" viewBox="0 0 20 19"><path d="M3 4.5 H17" stroke="#d8d8d8" stroke-width="2.2"/><path d="M3 9.5 H17" stroke="#d8d8d8" stroke-width="1.2"/><path d="M3 14 H6 M8 14 H11 M13 14 H15" stroke="#d8d8d8" stroke-width="1.2"/><path d="M16 18 H19 V15 Z" fill="#2fd06c"/></svg>
<div style="left:1224px;top:978.5px;width:150px;height:17px;background:#2a2a2a;border-radius:3px;"></div>
<div class="t" style="left:1226px;top:979.5px;height:16px;line-height:16px;color:#e6e6e6;font-size:12.5px;letter-spacing:-0.35px;letter-spacing:-0.341px;">Default Keyframe Layer</div>
<div style="left:1380px;top:978.5px;width:70px;height:17px;background:#2a2a2a;border-radius:3px;"></div>
<div class="t" style="left:1385px;top:979.5px;height:16px;line-height:16px;color:#555;font-size:12.5px;">F</div>
<div class="t" style="left:1397px;top:979.5px;height:16px;line-height:16px;color:#d0d0d0;font-size:12.5px;">-</div>
<div class="t" style="left:1456px;top:979.5px;height:16px;line-height:16px;color:#e6e6e6;font-size:12.5px;letter-spacing:-0.35px;letter-spacing:-0.280px;">Align:</div>
<div style="left:1493px;top:977.5px;width:52px;height:19px;background:#222;border-radius:4px;"></div>
<svg style="left:1493px;top:977.5px;" width="52" height="19" viewBox="0 0 52 19"><path d="M4 4 V15" stroke="#d8d8d8" stroke-width="1.3"/><path d="M6.5 7 H9 M10.5 7 H14 M6.5 12 H9 M10.5 12 H12" stroke="#d8d8d8" stroke-width="1.6"/><path d="M26 3.5 V15.5" stroke="#d8d8d8" stroke-width="1.3"/><path d="M21 7 H24 M28 7 H31 M22 12 H24 M28 12 H30" stroke="#d8d8d8" stroke-width="1.6"/><path d="M48 4 V15" stroke="#d8d8d8" stroke-width="1.3"/><path d="M38 7 H41.5 M43 7 H45.5 M40 12 H41.5 M43 12 H45.5" stroke="#d8d8d8" stroke-width="1.6"/></svg>
<div style="left:1510px;top:978.5px;width:1px;height:17px;background:#3c3c3c;"></div>
<div style="left:1527px;top:978.5px;width:1px;height:17px;background:#3c3c3c;"></div>
<div style="left:1549px;top:977.5px;width:19px;height:19px;background:#222;border-radius:4px;"></div>
<svg style="left:1549px;top:977.5px;" width="19" height="19" viewBox="0 0 19 19"><rect x="4.5" y="4.5" width="10" height="10" fill="none" stroke="#d8d8d8" stroke-width="1.1"/><g fill="#d8d8d8"><rect x="3" y="3" width="3" height="3"/><rect x="13" y="3" width="3" height="3"/><rect x="3" y="13" width="3" height="3"/><rect x="13" y="13" width="3" height="3"/><rect x="8" y="8" width="3" height="3"/></g></svg>
<div style="left:1570px;top:977.5px;width:31px;height:19px;background:#222;border-radius:4px;"></div>
<svg style="left:1570px;top:977.5px;" width="20" height="19" viewBox="0 0 20 19"><path d="M5.5 14.5 L10 8.5 A3.6 3.6 0 0 1 16 12 L13.5 15.5" fill="none" stroke="#d8d8d8" stroke-width="2.6"/><path d="M4.3 13.6 L6.8 15.4 M12.3 14.6 L14.8 16.4" stroke="#2a2a2a" stroke-width="0.9"/></svg>
<svg style="left:1591px;top:981.5px;" width="9" height="11" viewBox="0 0 9 11"><path d="M1.5 1.5 L7 5.5 L1.5 9.5 Z" fill="none" stroke="#a0a0a0" stroke-width="1"/></svg>
<div style="left:1605px;top:977.5px;width:31px;height:19px;background:#222;border-radius:4px;"></div>
<svg style="left:1605px;top:977.5px;" width="20" height="19" viewBox="0 0 20 19"><path d="M3 9.5 H5 M15 9.5 H17" stroke="#d8d8d8" stroke-width="1.2"/><path d="M7 6 V13 M10 3.5 V15.5 M13 7 V12" stroke="#d8d8d8" stroke-width="1.3"/></svg>
<svg style="left:1626px;top:981.5px;" width="9" height="11" viewBox="0 0 9 11"><path d="M1.5 1.5 L7 5.5 L1.5 9.5 Z" fill="none" stroke="#a0a0a0" stroke-width="1"/></svg>
<svg style="left:1742px;top:979.5px;" width="16" height="16" viewBox="0 0 16 16"><circle cx="7" cy="7" r="5" fill="none" stroke="#d0d0d0" stroke-width="1.1"/><path d="M4.5 7 H9.5 M11 11 L14 14" stroke="#d0d0d0" stroke-width="1.2"/></svg>
<div style="left:1767px;top:985.5px;width:115px;height:3px;background:#3a3a3a;border-radius:2px;"></div>
<svg style="left:1761px;top:981.5px;" width="12" height="12" viewBox="0 0 12 12"><circle cx="6" cy="6" r="5" fill="#57b89c"/><circle cx="6" cy="6" r="2.6" fill="#9fe6cf"/></svg>
<svg style="left:1886px;top:979.5px;" width="16" height="16" viewBox="0 0 16 16"><circle cx="7" cy="7" r="5" fill="none" stroke="#d0d0d0" stroke-width="1.1"/><path d="M4.5 7 H9.5 M7 4.5 V9.5 M11 11 L14 14" stroke="#d0d0d0" stroke-width="1.2"/></svg>
<div style="left:12px;top:475px;width:271px;height:26px;border:3px solid #b4e61e;"></div>
<div style="left:169px;top:451px;width:224px;height:27px;border:3px solid #f5c21a;"></div>
<div style="left:35px;top:888px;width:313px;height:29.5px;border:3px solid #b4e61e;"></div>
<div style="left:638px;top:668px;width:184px;height:30px;border:3px solid #b4e61e;"></div>
<div style="left:645px;top:735px;width:177px;height:30px;border:3px solid #b4e61e;"></div>
<svg style="left:140px;top:570px;" width="44" height="72" viewBox="0 0 44 72"><path d="M22 11.2 L34.7 36.4 H28.7 V64.5 H15.6 V36.4 H9.4 Z" fill="none" stroke="#b4e61e" stroke-width="3" stroke-linejoin="miter" stroke-miterlimit="10"/></svg>
<svg style="left:0px;top:0px;" width="480" height="1029" viewBox="0 0 480 1029"><path d="M238 488 C208 488 214 903 184 903" fill="none" stroke="#3a9ad9" stroke-width="1.3"/><circle cx="238" cy="488" r="4.6" fill="#3aa4ec"/><circle cx="184" cy="903" r="4.8" fill="#3aa4ec"/><path d="M179.5 909 H188.5" stroke="#3aa4ec" stroke-width="1.2"/></svg>
<div style="left:1195.5px;top:809px;width:2px;height:2px;background:#8a8a8a;"></div>
<div style="left:1195.5px;top:814px;width:2px;height:2px;background:#8a8a8a;"></div>
<div style="left:1195.5px;top:819px;width:2px;height:2px;background:#8a8a8a;"></div>
</body></html>
